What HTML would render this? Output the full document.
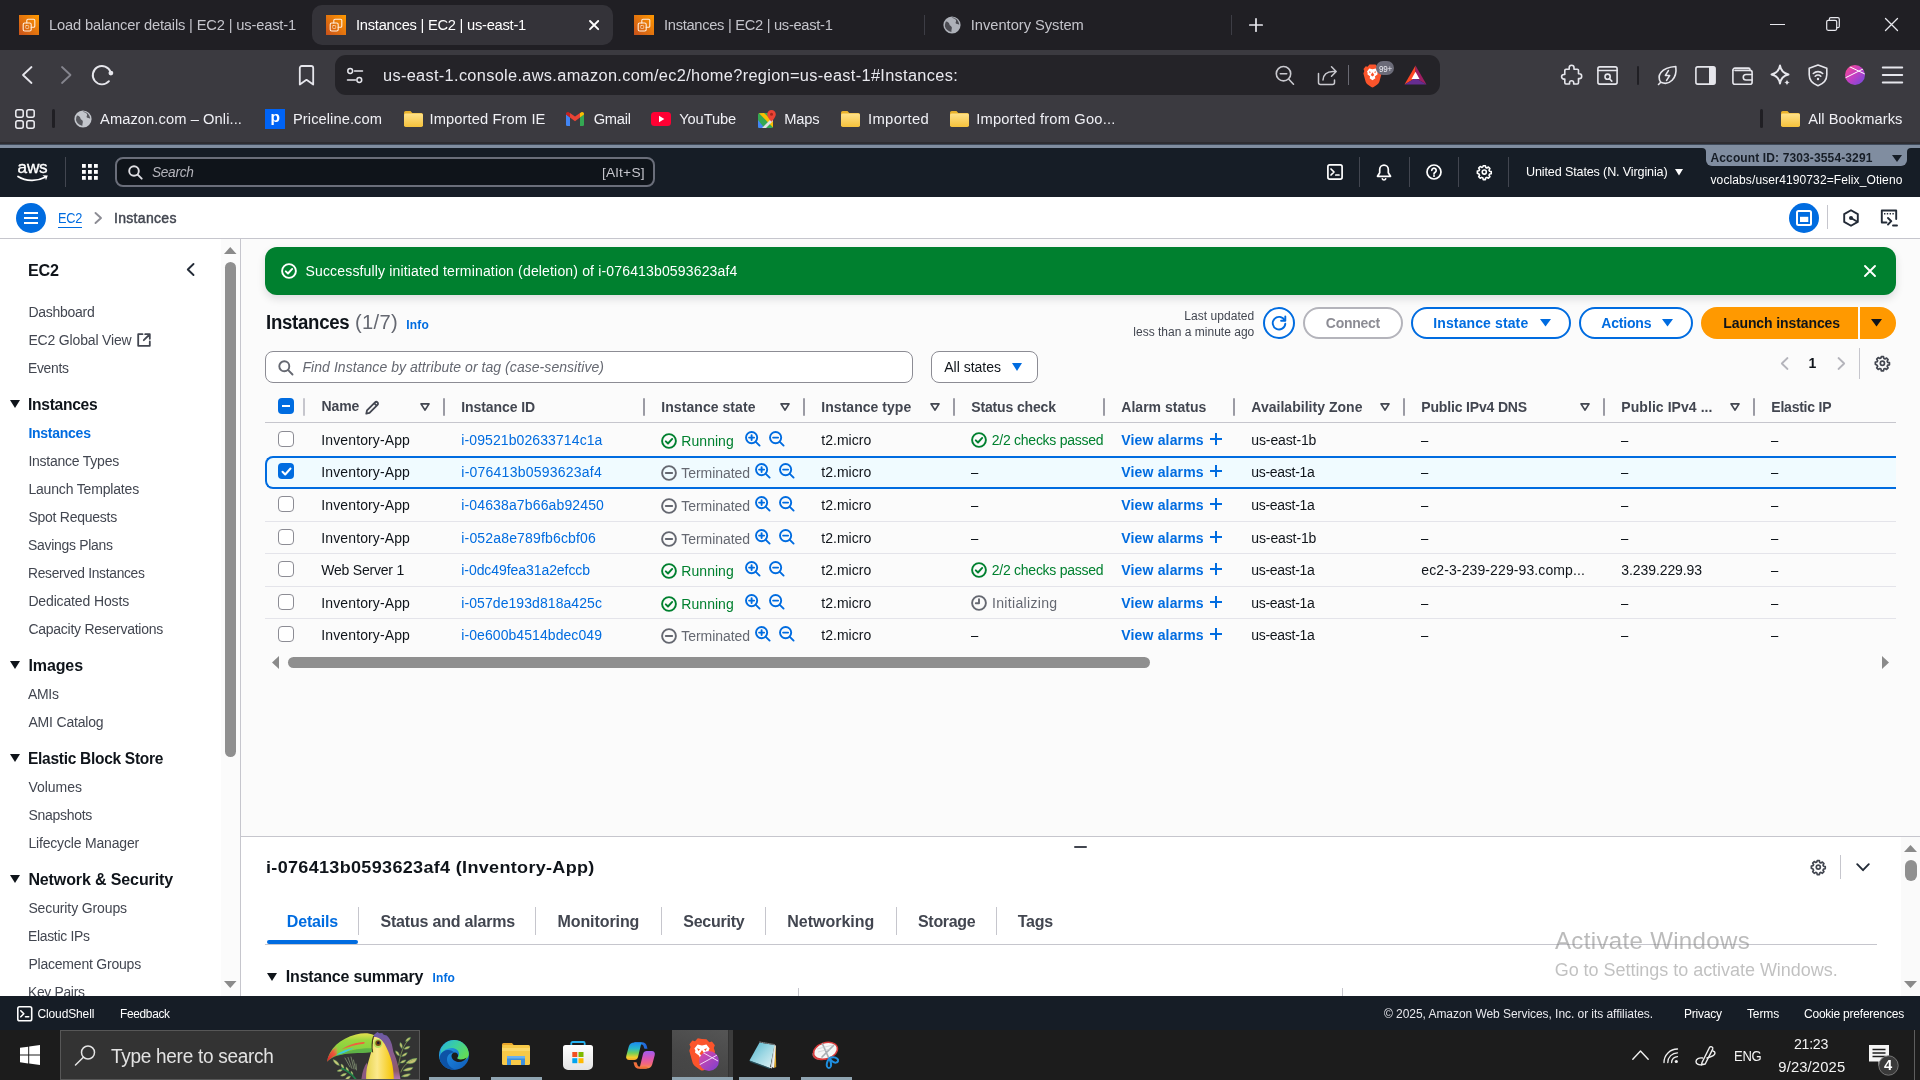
<!DOCTYPE html>
<html lang="en">
<head>
<meta charset="utf-8">
<title>Instances | EC2 | us-east-1</title>
<style>
*{box-sizing:border-box;margin:0;padding:0}
html,body{width:1920px;height:1080px;overflow:hidden;background:#fafafa;font-family:"Liberation Sans",sans-serif;color:#0f141a}
#w{position:absolute;left:0;top:0;width:1920px;height:1080px;overflow:hidden;will-change:transform;background:#fbfbfb}
.abs{position:absolute}
.t{position:absolute;white-space:pre;line-height:1}
svg{position:absolute;overflow:visible}
.s{fill:none;stroke-linecap:round;stroke-linejoin:round}
</style>
</head>
<body>
<div id="w">
<div class="abs" style="left:0px;top:0px;width:1920px;height:50px;background:#201f24;"></div>
<div class="abs" style="left:0px;top:50px;width:1920px;height:93px;background:#3b3a40;"></div>
<div class="abs" style="left:0px;top:142px;width:1920px;height:2px;background:#2e2d32;"></div>
<div class="abs" style="left:0px;top:144px;width:1920px;height:1px;background:#3f4a5a;"></div>
<div class="abs" style="left:0px;top:145px;width:1920px;height:3px;background:#808da0;"></div>
<div class="abs" style="left:312px;top:5px;width:301px;height:40px;background:#343339;border-radius:10px;"></div>
<svg style="left:19px;top:15px;" width="20" height="20" viewBox="0 0 20 20"><defs><linearGradient id="g19" x1="0" y1="1" x2="1" y2="0"><stop offset="0" stop-color="#c8511b"/><stop offset="1" stop-color="#f90"/></linearGradient></defs><rect width="20" height="20" fill="url(#g19)"/><g class="s" stroke="#ffeedd" stroke-width="1.1"><rect x="4.2" y="8" width="8" height="8" rx="1.5"/><rect x="6.7" y="10.5" width="3" height="3" rx=".5" stroke-width=".8" opacity=".7"/><path d="M7.8 8V5.4a1.2 1.2 0 0 1 1.2-1.2h5.6a1.2 1.2 0 0 1 1.2 1.2v5.6a1.2 1.2 0 0 1-1.2 1.2h-2.4"/></g></svg>
<svg style="left:326px;top:15px;" width="20" height="20" viewBox="0 0 20 20"><defs><linearGradient id="g326" x1="0" y1="1" x2="1" y2="0"><stop offset="0" stop-color="#c8511b"/><stop offset="1" stop-color="#f90"/></linearGradient></defs><rect width="20" height="20" fill="url(#g326)"/><g class="s" stroke="#ffeedd" stroke-width="1.1"><rect x="4.2" y="8" width="8" height="8" rx="1.5"/><rect x="6.7" y="10.5" width="3" height="3" rx=".5" stroke-width=".8" opacity=".7"/><path d="M7.8 8V5.4a1.2 1.2 0 0 1 1.2-1.2h5.6a1.2 1.2 0 0 1 1.2 1.2v5.6a1.2 1.2 0 0 1-1.2 1.2h-2.4"/></g></svg>
<svg style="left:634px;top:15px;" width="20" height="20" viewBox="0 0 20 20"><defs><linearGradient id="g634" x1="0" y1="1" x2="1" y2="0"><stop offset="0" stop-color="#c8511b"/><stop offset="1" stop-color="#f90"/></linearGradient></defs><rect width="20" height="20" fill="url(#g634)"/><g class="s" stroke="#ffeedd" stroke-width="1.1"><rect x="4.2" y="8" width="8" height="8" rx="1.5"/><rect x="6.7" y="10.5" width="3" height="3" rx=".5" stroke-width=".8" opacity=".7"/><path d="M7.8 8V5.4a1.2 1.2 0 0 1 1.2-1.2h5.6a1.2 1.2 0 0 1 1.2 1.2v5.6a1.2 1.2 0 0 1-1.2 1.2h-2.4"/></g></svg>
<div class="t" style="left:49.00px;top:18.00px;font-size:14.7px;color:#c4c4cb;letter-spacing:-0.164px;">Load balancer details | EC2 | us-east-1</div>
<div class="t" style="left:356.00px;top:18.00px;font-size:14.7px;color:#ffffff;letter-spacing:-0.245px;">Instances | EC2 | us-east-1</div>
<div class="t" style="left:664.00px;top:18.00px;font-size:14.7px;color:#c4c4cb;letter-spacing:-0.3px;transform:scaleX(0.9999);transform-origin:0 0;">Instances | EC2 | us-east-1</div>
<div class="t" style="left:970.80px;top:18.00px;font-size:14.7px;color:#c4c4cb;letter-spacing:-0.029px;">Inventory System</div>
<svg style="left:588px;top:19px;" width="12" height="12" viewBox="0 0 12 12"><path class="s" stroke="#fff" stroke-width="1.9" d="M2 2l8.2 8.2M10.2 2L2 10.2"/></svg>
<div class="abs" style="left:924px;top:15px;width:1px;height:20px;background:#3d3d45;"></div>
<div class="abs" style="left:1231px;top:15px;width:1px;height:20px;background:#3d3d45;"></div>
<svg style="left:942px;top:15px;" width="20" height="20" viewBox="0 0 20 20"><circle cx="10" cy="10" r="8.6" fill="#aeb1b9"/><path fill="#2a2a30" d="M4 6.5c2 .2 3.2 1.3 3.4 2.8.2 1.6 2 1.6 2.4 3 .3 1.3-.6 2.6-.4 4.6-3-.4-5.8-2.6-6.5-5.7 0-1.800.3-3.300 1.100-4.700zM9.500 2.300c1.600 1.400 3.600 1 4.400 2.600.7 1.500-.7 2-.2 3.300.4 1.100 2.500.6 3.500 1.600-.100-3.800-3.500-7.400-7.700-7.500z" opacity=".75"/></svg>
<svg style="left:1249px;top:18px;" width="14" height="14" viewBox="0 0 14 14"><path class="s" stroke="#e8e8ee" stroke-width="1.7" d="M7 0.800v12.400M0.800 7h12.400"/></svg>
<div class="abs" style="left:1770px;top:24px;width:15px;height:1px;background:#e8e8ee;"></div>
<svg style="left:1826px;top:17px;" width="14" height="14" viewBox="0 0 14 14"><g class="s" stroke="#e8e8ee" stroke-width="1.2"><rect x="0.700" y="3.300" width="10" height="10" rx="1.500"/><path d="M3.300 3.300V2.200a1.500 1.500 0 0 1 1.500-1.500h7a1.500 1.500 0 0 1 1.500 1.500v7a1.500 1.500 0 0 1-1.500 1.500h-1.100"/></g></svg>
<svg style="left:1885px;top:18px;" width="13" height="13" viewBox="0 0 13 13"><path class="s" stroke="#e8e8ee" stroke-width="1.3" d="M0.500 0.500l12 12M12.500 0.500l-12 12"/></svg>
<svg style="left:20px;top:65px;" width="16" height="20" viewBox="0 0 16 20"><path class="s" stroke="#e6e6ec" stroke-width="1.800" d="M11.500 2L3 10l8.500 8"/></svg>
<svg style="left:58px;top:65px;" width="16" height="20" viewBox="0 0 16 20"><path class="s" stroke="#85858e" stroke-width="1.800" d="M4 2l8.500 8L4 18"/></svg>
<svg style="left:91px;top:64px;" width="24" height="22" viewBox="0 0 24 22"><path class="s" stroke="#e6e6ec" stroke-width="1.900" d="M19.650 8.050A9.200 9.200 0 1 0 17.940 17.240"/><circle cx="19.900" cy="9.100" r="2.400" fill="#e6e6ec"/></svg>
<svg style="left:298px;top:65px;" width="17" height="21" viewBox="0 0 17 21"><path class="s" stroke="#e6e6ec" stroke-width="1.800" d="M1.800 3a2 2 0 0 1 2-2h9.400a2 2 0 0 1 2 2v16.500l-6.700-4.700-6.700 4.700z"/></svg>
<div class="abs" style="left:335px;top:55px;width:1105px;height:40px;background:#242328;border-radius:11px;"></div>
<svg style="left:346px;top:67px;" width="18" height="17" viewBox="0 0 18 17"><g class="s" stroke="#e6e6ec" stroke-width="1.500"><circle cx="4.200" cy="4" r="2.400"/><path d="M8.500 4h8"/><circle cx="13.300" cy="13" r="2.400"/><path d="M1.500 13h8"/></g></svg>
<div class="t" style="left:383.00px;top:68.00px;font-size:15.6px;color:#e9e9ef;letter-spacing:0.3px;transform:scaleX(1.0490);transform-origin:0 0;">us-east-1.console.aws.amazon.com/ec2/home?region=us-east-1#Instances:</div>
<svg style="left:1275px;top:65px;" width="20" height="21" viewBox="0 0 20 21"><g class="s" stroke="#c9c9cf" stroke-width="1.600"><circle cx="8.500" cy="8.700" r="7.200"/><path d="M13.800 14.200l4.700 5M5.300 8.700h6.400"/></g></svg>
<svg style="left:1317px;top:65px;" width="22" height="21" viewBox="0 0 22 21"><g class="s" stroke="#c9c9cf" stroke-width="1.500"><path d="M1.500 8.500v9a2 2 0 0 0 2 2h12a2 2 0 0 0 2-2v-2.500"/><path d="M6 15c.3-5 3.500-8.300 10-8.500h3M14.500 1.800l4.700 4.700-4.700 4.700"/></g></svg>
<div class="abs" style="left:1348px;top:65px;width:1px;height:20px;background:#6a6a73;"></div>
<svg style="left:1362px;top:64px;" width="21" height="24" viewBox="0 0 21 24"><path fill="#fb542b" d="M10.500 0.500l3 .1 2 2.100 1.800-.4 2.200 2.600-.8 2 .9 2.600-2.100 7.800c-.4 1.500-1.200 2.600-2.500 3.500l-3.300 2.300c-.8.500-1.600.5-2.400 0L6 20.800c-1.300-.9-2.100-2-2.500-3.500L1.400 9.500l.9-2.600-.8-2 2.200-2.600 1.800.4 2-2.100z"/><path fill="#fff" d="M10.500 5.200l3.200-.7 2.300 2.900-.7 1.500.3 1.400-2.800 2.200.6 1.700-2.900 2-2.900-2 .6-1.700-2.800-2.200.3-1.400L5 7.400l2.300-2.900z"/><path fill="#fb542b" d="M10.500 8.300l1.800 2.800-1.800 1.500-1.800-1.500zM6.800 7.200l2.100.7-1.100 1.300zM14.200 7.200l-2.100.7 1.100 1.300z"/></svg>
<div class="abs" style="left:1376px;top:60.5px;width:17.5px;height:14.5px;background:#6b6b78;border-radius:7px;"></div>
<div class="t" style="left:1378.50px;top:65.00px;font-size:8.5px;color:#ececf2;letter-spacing:-0.3px;transform:scaleX(0.9466);transform-origin:0 0;">99+</div>
<svg style="left:1404px;top:65px;" width="23" height="21" viewBox="0 0 23 21"><path fill="#ff4724" d="M11.500 0.500L0.500 19.500l11-6.500z"/><path fill="#9e1f63" d="M11.500 0.500l11 19-11-6.500z"/><path fill="#662d91" d="M0.500 19.500h22l-11-6.500z"/><path fill="#fff" d="M11.500 6.800l4 7.200h-8z"/></svg>
<svg style="left:1561px;top:65px;" width="21" height="21" viewBox="0 0 21 21"><path class="s" stroke="#e6e6ec" stroke-width="1.600" d="M8.200 2.600a2.400 2.400 0 0 1 4.800 0v1.700h3.300a1.200 1.200 0 0 1 1.200 1.200v3.300h.8a2.400 2.400 0 0 1 0 4.800h-.8v4.200a1.200 1.200 0 0 1-1.200 1.200h-3.600v-1.200a2.100 2.100 0 0 0-4.200 0V19H5a1.200 1.200 0 0 1-1.200-1.200v-3.700H2.900a2.300 2.300 0 0 1 0-4.600h.9V5.500A1.200 1.200 0 0 1 5 4.300h3.200z"/></svg>
<svg style="left:1597px;top:66px;" width="21" height="19" viewBox="0 0 21 19"><g class="s" stroke="#e6e6ec" stroke-width="1.600"><rect x="0.900" y="0.900" width="19.200" height="17.200" rx="1.800"/><path d="M0.900 4.500h19.200"/><circle cx="10.600" cy="10.700" r="2.600"/><path d="M12.500 12.700l2.300 2.400"/></g></svg>
<div class="abs" style="left:1637px;top:66px;width:2px;height:19px;background:#201f24;border-radius:1px;"></div>
<svg style="left:1657px;top:65px;" width="21" height="21" viewBox="0 0 21 21"><g class="s" stroke="#e6e6ec" stroke-width="1.600"><path d="M3.800 17.300C-.5 11 3.500 2.500 18.800 1.500 20.300 13.500 12.500 21 3.800 17.300z"/><path d="M3.500 17.500l-2 2"/><path d="M11.500 5.500l-3.200 5h4.400l-3.200 5" stroke-width="1.400"/></g></svg>
<svg style="left:1695px;top:66px;" width="21" height="19" viewBox="0 0 21 19"><rect x="0.900" y="0.900" width="19.200" height="17.200" rx="1.800" class="s" stroke="#e6e6ec" stroke-width="1.600"/><path fill="#e6e6ec" d="M14 1h4.500a1.600 1.600 0 0 1 1.600 1.600v13.800a1.600 1.600 0 0 1-1.600 1.600H14z"/></svg>
<svg style="left:1732px;top:66px;" width="21" height="19" viewBox="0 0 21 19"><g class="s" stroke="#e6e6ec" stroke-width="1.600"><path d="M0.900 4.200v12a2 2 0 0 0 2 2h15.200a2 2 0 0 0 2-2V6.400a2 2 0 0 0-2-2H3"/><path d="M0.900 4.200a2.100 2.100 0 0 1 2.100-2.100H16.500a1.500 1.500 0 0 1 1.500 1.500v.8"/><path d="M20 8.500h-6a2.500 2.500 0 0 0 0 5.500h6"/></g></svg>
<svg style="left:1769px;top:64px;" width="23" height="23" viewBox="0 0 23 23"><g class="s" stroke="#e6e6ec" stroke-width="1.900"><path d="M11 1.500c.8 5 3 7.700 8.500 9-5.500 1.300-7.700 4-8.500 9-.8-5-3-7.700-8.500-9 5.500-1.300 7.700-4 8.500-9z"/></g><path fill="#e6e6ec" d="M18 15.500c.3 1.900 1.100 2.700 3 3-1.900.3-2.700 1.100-3 3-.3-1.900-1.100-2.700-3-3 1.900-.3 2.700-1.100 3-3z"/></svg>
<svg style="left:1808px;top:64px;" width="20" height="23" viewBox="0 0 20 23"><g class="s" stroke="#e6e6ec" stroke-width="1.600"><path d="M10 1L1.200 4.200v6.500c0 5 3.500 9 8.800 11 5.300-2 8.800-6 8.800-11V4.200z"/><path d="M5.300 9.500a6.800 6.800 0 0 1 9.400 0M7.200 12.200a4 4 0 0 1 5.600 0"/></g><circle cx="10" cy="15" r="1.200" fill="#e6e6ec"/></svg>
<svg style="left:1845px;top:65px;" width="20" height="20" viewBox="0 0 20 20"><defs><linearGradient id="av" x1="0" y1="0" x2="1" y2="1"><stop offset="0" stop-color="#ff4a8d"/><stop offset=".5" stop-color="#c23fc4"/><stop offset="1" stop-color="#6a4be0"/></linearGradient><clipPath id="avc"><circle cx="10" cy="10" r="10"/></clipPath></defs><circle cx="10" cy="10" r="10" fill="url(#av)"/><g clip-path="url(#avc)" stroke="#fff" stroke-width="1"><path d="M0 13L20 3M3 1l17 8"/></g></svg>
<svg style="left:1882px;top:66px;" width="21" height="18" viewBox="0 0 21 18"><path class="s" stroke="#e6e6ec" stroke-width="2" d="M0.800 1.500h19.400M0.800 9h19.400M0.800 16.500h19.400"/></svg>
<svg style="left:15px;top:109px;" width="20" height="20" viewBox="0 0 20 20"><g class="s" stroke="#f0f0f5" stroke-width="1.500"><rect x="0.800" y="0.800" width="7.400" height="7.400" rx="2"/><rect x="11.800" y="0.800" width="7.400" height="7.400" rx="2"/><rect x="0.800" y="11.800" width="7.400" height="7.400" rx="2"/><rect x="11.800" y="11.800" width="7.400" height="7.400" rx="2"/></g></svg>
<div class="abs" style="left:52px;top:109px;width:3px;height:19px;background:#201f24;border-radius:1.500px;"></div>
<svg style="left:74px;top:110px;" width="18" height="18" viewBox="0 0 18 18"><circle cx="9" cy="9" r="8.600" fill="#c3c6cc"/><path fill="#3b3b41" opacity=".8" d="M3 5.500c2 .2 3.200 1.300 3.400 2.800.2 1.500 2 1.500 2.400 2.900.3 1.300-.6 2.500-.4 4.500C5.400 15.300 2.600 13 2 10c0-1.700.3-3.200 1-4.500zM8.500 1.300c1.600 1.400 3.600 1 4.400 2.600.7 1.500-.7 2-.2 3.300.4 1.100 2.500.6 3.500 1.600C16 5 12.700 1.400 8.500 1.300z"/></svg>
<div class="t" style="left:100.00px;top:112.00px;font-size:14.7px;color:#f0f0f5;letter-spacing:0.080px;">Amazon.com – Onli...</div>
<div class="abs" style="left:265px;top:109px;width:20px;height:20px;background:#0063f5;"></div>
<div class="t" style="left:270.60px;top:109.00px;font-size:15.5px;color:#fff;font-weight:700;letter-spacing:-0.069px;">p</div>
<div class="t" style="left:293.00px;top:112.00px;font-size:14.7px;color:#f0f0f5;letter-spacing:0.065px;">Priceline.com</div>
<svg style="left:403.5px;top:111px;" width="19" height="16" viewBox="0 0 19 16"><defs><linearGradient id="f403" x1="0" y1="0" x2="0" y2="1"><stop offset="0" stop-color="#ffe28a"/><stop offset="1" stop-color="#f5c13b"/></linearGradient></defs><path fill="#e9b22c" d="M0 1.700A1.700 1.700 0 0 1 1.700 0h4.800l1.800 2H17.300A1.700 1.700 0 0 1 19 3.700V5H0z"/><rect y="2.600" width="19" height="13.400" rx="1.700" fill="url(#f403)"/></svg>
<div class="t" style="left:429.50px;top:112.00px;font-size:14.7px;color:#f0f0f5;letter-spacing:0.108px;">Imported From IE</div>
<svg style="left:566px;top:112px;" width="18" height="14" viewBox="0 0 18 14"><path fill="#4285f4" d="M0 2v10.800A1.200 1.200 0 0 0 1.200 14H4V5.500z"/><path fill="#34a853" d="M14 14h2.800a1.200 1.200 0 0 0 1.200-1.200V2L14 5.500z"/><path fill="#fbbc04" d="M14 .9v4.600L18 2.600V1.800c0-1.500-1.700-2.300-2.900-1.400z"/><path fill="#c5221f" d="M0 2.600l4 2.900V.9L2.900.4C1.700-.5 0 .3 0 1.800z"/><path fill="#ea4335" d="M4 5.500V.9l5 3.700 5-3.700v4.600l-5 3.700z"/></svg>
<div class="t" style="left:593.70px;top:112.00px;font-size:14.7px;color:#f0f0f5;letter-spacing:-0.272px;">Gmail</div>
<svg style="left:651px;top:112px;" width="20" height="14" viewBox="0 0 20 14"><rect width="20" height="14" rx="3.500" fill="#ff0033"/><path fill="#fff" d="M8 3.800v6.400L13.300 7z"/></svg>
<div class="t" style="left:679.20px;top:112.00px;font-size:14.7px;color:#f0f0f5;letter-spacing:-0.103px;">YouTube</div>
<svg style="left:758px;top:110px;" width="18" height="19" viewBox="0 0 18 19"><rect y="3" width="15" height="15" rx="1.500" fill="#34a853"/><path fill="#4285f4" d="M0 16.500V10l6.500 8H1.500A1.500 1.500 0 0 1 0 16.500z"/><path fill="#fbbc04" d="M1 3.200L15 17.600v-6L6 3z"/><path fill="#e1e1e1" d="M4 18l11-11v4L8 18z"/><path fill="#ea4335" d="M13.500 0a4.300 4.300 0 0 0-4.300 4.300c0 3 4.300 7.500 4.300 7.500s4.300-4.500 4.300-7.500A4.300 4.300 0 0 0 13.500 0z"/><circle cx="13.500" cy="4.300" r="1.500" fill="#a5271c"/></svg>
<div class="t" style="left:784.20px;top:112.00px;font-size:14.7px;color:#f0f0f5;letter-spacing:-0.155px;">Maps</div>
<svg style="left:840.5px;top:111px;" width="19" height="16" viewBox="0 0 19 16"><defs><linearGradient id="f840" x1="0" y1="0" x2="0" y2="1"><stop offset="0" stop-color="#ffe28a"/><stop offset="1" stop-color="#f5c13b"/></linearGradient></defs><path fill="#e9b22c" d="M0 1.700A1.700 1.700 0 0 1 1.700 0h4.800l1.800 2H17.300A1.700 1.700 0 0 1 19 3.700V5H0z"/><rect y="2.600" width="19" height="13.400" rx="1.700" fill="url(#f840)"/></svg>
<div class="t" style="left:868.20px;top:112.00px;font-size:14.7px;color:#f0f0f5;letter-spacing:0.3px;transform:scaleX(1.0105);transform-origin:0 0;">Imported</div>
<svg style="left:950px;top:111px;" width="19" height="16" viewBox="0 0 19 16"><defs><linearGradient id="f950" x1="0" y1="0" x2="0" y2="1"><stop offset="0" stop-color="#ffe28a"/><stop offset="1" stop-color="#f5c13b"/></linearGradient></defs><path fill="#e9b22c" d="M0 1.700A1.700 1.700 0 0 1 1.700 0h4.800l1.800 2H17.300A1.700 1.700 0 0 1 19 3.700V5H0z"/><rect y="2.600" width="19" height="13.400" rx="1.700" fill="url(#f950)"/></svg>
<div class="t" style="left:976.20px;top:112.00px;font-size:14.7px;color:#f0f0f5;letter-spacing:0.189px;">Imported from Goo...</div>
<div class="abs" style="left:1760px;top:109px;width:3px;height:19px;background:#201f24;border-radius:1.500px;"></div>
<svg style="left:1780.5px;top:111px;" width="19" height="16" viewBox="0 0 19 16"><defs><linearGradient id="f1780" x1="0" y1="0" x2="0" y2="1"><stop offset="0" stop-color="#ffe28a"/><stop offset="1" stop-color="#f5c13b"/></linearGradient></defs><path fill="#e9b22c" d="M0 1.700A1.700 1.700 0 0 1 1.700 0h4.800l1.800 2H17.300A1.700 1.700 0 0 1 19 3.700V5H0z"/><rect y="2.600" width="19" height="13.400" rx="1.700" fill="url(#f1780)"/></svg>
<div class="t" style="left:1808.20px;top:112.00px;font-size:14.7px;color:#f0f0f5;letter-spacing:0.033px;">All Bookmarks</div>
<div class="abs" style="left:0px;top:148px;width:1920px;height:49px;background:#161d26;"></div>
<div class="t" style="left:17.60px;top:159.00px;font-size:17.2px;color:#fff;letter-spacing:-0.259px;-webkit-text-stroke:.35px #fff;">aws</div>
<svg style="left:16.5px;top:175px;" width="32" height="8" viewBox="0 0 32 8"><path class="s" stroke="#fff" stroke-width="1.700" d="M1 1.500C9 6.500 20 6.500 27.500 2.500"/><path fill="#fff" d="M25.500 0.300l5.300.2-1.800 4.700-.9-2.700z"/></svg>
<div class="abs" style="left:65px;top:157px;width:1px;height:30px;background:#424650;"></div>
<svg style="left:82px;top:164px;" width="16" height="16" viewBox="0 0 16 16"><rect x="0" y="0" width="3.800" height="3.800" fill="#fff"/><rect x="0" y="6" width="3.800" height="3.800" fill="#fff"/><rect x="0" y="12" width="3.800" height="3.800" fill="#fff"/><rect x="6" y="0" width="3.800" height="3.800" fill="#fff"/><rect x="6" y="6" width="3.800" height="3.800" fill="#fff"/><rect x="6" y="12" width="3.800" height="3.800" fill="#fff"/><rect x="12" y="0" width="3.800" height="3.800" fill="#fff"/><rect x="12" y="6" width="3.800" height="3.800" fill="#fff"/><rect x="12" y="12" width="3.800" height="3.800" fill="#fff"/></svg>
<div class="abs" style="left:115px;top:157px;width:540px;height:29.5px;background:#0f141a;border:2px solid #6a6e7a;border-radius:8px;"></div>
<svg style="left:128px;top:165px;" width="15" height="15" viewBox="0 0 15 15"><g class="s" stroke="#dedee3" stroke-width="1.900"><circle cx="6" cy="6" r="4.800"/><path d="M9.700 9.700l4 4"/></g></svg>
<div class="t" style="left:152.00px;top:165.00px;font-size:14px;color:#b4b4bb;font-style:italic;letter-spacing:-0.3px;transform:scaleX(0.9751);transform-origin:0 0;">Search</div>
<div class="t" style="left:601.50px;top:166.00px;font-size:13.5px;color:#c6c6cd;letter-spacing:0.3px;transform:scaleX(1.0176);transform-origin:0 0;">[Alt+S]</div>
<svg style="left:1327px;top:164px;" width="16" height="16" viewBox="0 0 16 16"><g class="s" stroke="#fff" stroke-width="1.700"><rect x="0.900" y="0.900" width="14.200" height="14.200" rx="1.800"/><path d="M4 5l3 3-3 3M8.800 11h3.200"/></g></svg>
<div class="abs" style="left:1359px;top:157px;width:1px;height:30px;background:#424650;"></div>
<div class="abs" style="left:1409px;top:157px;width:1px;height:30px;background:#424650;"></div>
<div class="abs" style="left:1458px;top:157px;width:1px;height:30px;background:#424650;"></div>
<div class="abs" style="left:1508px;top:157px;width:1px;height:30px;background:#424650;"></div>
<svg style="left:1376px;top:164px;" width="16" height="17" viewBox="0 0 16 17"><path class="s" stroke="#fff" stroke-width="1.700" d="M8 1.200a4.300 4.300 0 0 0-4.300 4.300v3.200L1.500 12.300h13L12.300 8.700V5.500A4.300 4.300 0 0 0 8 1.200zM6.300 14.800a1.800 1.800 0 0 0 3.400 0"/></svg>
<svg style="left:1426px;top:164px;" width="16" height="16" viewBox="0 0 16 16"><circle cx="8" cy="8" r="7" class="s" stroke="#fff" stroke-width="1.700"/><path class="s" stroke="#fff" stroke-width="1.700" d="M5.800 6.300a2.200 2.200 0 1 1 3.400 1.900c-.8.500-1.200.9-1.200 1.700"/><circle cx="8" cy="12" r="1" fill="#fff"/></svg>
<svg style="left:1476.7px;top:164.7px;" width="14.6" height="14.6" viewBox="0 0 16 16.400"><g class="s" stroke="#fff" stroke-width="1.8" transform="translate(0 -.2)"><path d="M6.800 1h2.400l.4 1.900 1.300.6 1.700-1 1.700 1.700-1 1.700.6 1.300 1.900.4v2.400l-1.900.4-.6 1.300 1 1.700-1.700 1.700-1.700-1-1.300.6-.4 1.900H6.800l-.4-1.900-1.300-.6-1.700 1-1.700-1.700 1-1.700-.6-1.300L.2 9.400V7l1.900-.4.6-1.300-1-1.700 1.700-1.700 1.700 1 1.300-.6z"/><circle cx="8" cy="8.200" r="2.300"/></g></svg>
<div class="t" style="left:1526.00px;top:166.00px;font-size:12.6px;color:#fff;letter-spacing:-0.143px;">United States (N. Virginia)</div>
<svg style="left:1674.5px;top:169px;" width="8" height="6.5" viewBox="0 0 8 6.5"><path fill="#fff" d="M0 0h8L4 6.500z"/></svg>
<div class="abs" style="left:1706px;top:147px;width:201px;height:18.6px;background:#808da0;border-radius:0 0 6px 6px;"></div>
<div class="abs" style="left:1702px;top:148px;width:4px;height:4px;background:#808da0;"></div>
<div class="abs" style="left:1698px;top:148px;width:8px;height:8px;background:#161d26;border-radius:0 4px 0 0;"></div>
<div class="abs" style="left:1907px;top:148px;width:4px;height:4px;background:#808da0;"></div>
<div class="abs" style="left:1907px;top:148px;width:8px;height:8px;background:#161d26;border-radius:4px 0 0 0;"></div>
<div class="t" style="left:1710.50px;top:152.00px;font-size:12px;color:#161d26;font-weight:700;letter-spacing:0.125px;">Account ID: 7303-3554-3291</div>
<svg style="left:1892px;top:155px;" width="10" height="7" viewBox="0 0 10 7"><path fill="#161d26" d="M0 0h10L5 7z"/></svg>
<div class="t" style="left:1710.50px;top:174.00px;font-size:12px;color:#fff;letter-spacing:0.110px;">voclabs/user4190732=Felix_Otieno</div>
<div class="abs" style="left:0px;top:197px;width:1920px;height:41px;background:#fff;"></div>
<div class="abs" style="left:0px;top:238px;width:1920px;height:1px;background:#c6c6cd;"></div>
<div class="abs" style="left:16px;top:203px;width:30px;height:30px;background:#006ce0;border-radius:15px;"></div>
<svg style="left:24px;top:212px;" width="14" height="12" viewBox="0 0 14 12"><path stroke="#fff" stroke-width="2" d="M0 1h14M0 6h14M0 11h14"/></svg>
<div class="t" style="left:58.00px;top:211.00px;font-size:14px;color:#006ce0;letter-spacing:-0.3px;transform:scaleX(0.9114);transform-origin:0 0;text-decoration:underline;text-underline-offset:3.500px;text-decoration-thickness:1px;">EC2</div>
<svg style="left:94px;top:212px;" width="9" height="12" viewBox="0 0 9 12"><path class="s" stroke="#8c8c94" stroke-width="1.900" d="M1.500 1l5.500 5-5.500 5"/></svg>
<div class="t" style="left:114.30px;top:211.00px;font-size:14px;color:#424650;letter-spacing:0.3px;transform:scaleX(1.0010);transform-origin:0 0;-webkit-text-stroke:.45px #424650;">Instances</div>
<div class="abs" style="left:1789px;top:203px;width:30px;height:30px;background:#006ce0;border-radius:15px;"></div>
<svg style="left:1796px;top:210px;" width="16" height="16" viewBox="0 0 16 16"><rect x="1" y="1" width="14" height="14" rx="1.500" class="s" stroke="#fff" stroke-width="2"/><rect x="4" y="6.800" width="8.300" height="5.200" fill="#fff"/></svg>
<div class="abs" style="left:1827px;top:205px;width:1px;height:24px;background:#c6c6cd;"></div>
<svg style="left:1842px;top:209px;" width="18" height="18" viewBox="0 0 18 18"><g class="s" stroke="#232b37" stroke-width="1.900"><path d="M9 1.200l6.800 3.900v7.800L9 16.800 2.200 12.900V5.100z"/><path d="M9 9l6 3.500"/></g><circle cx="9" cy="9" r="2" fill="#232b37"/></svg>
<svg style="left:1880px;top:209px;" width="18" height="18" viewBox="0 0 18 18"><g class="s" stroke="#232b37" stroke-width="1.900"><path d="M6.500 13.500H1.800V1.500h14.400v8.500"/><path d="M8 9l3.300 3.200L8 15.500M13 16.500h4"/></g><path stroke="#232b37" stroke-width="1.400" stroke-dasharray="1.400 1.400" d="M4 4.700h10"/></svg>
<div class="abs" style="left:0px;top:239px;width:240px;height:757px;background:#fff;"></div>
<div class="abs" style="left:240px;top:239px;width:1px;height:757px;background:#c6c6cd;"></div>
<div class="t" style="left:28.40px;top:262.00px;font-size:17.2px;color:#0f141a;font-weight:700;letter-spacing:-0.3px;transform:scaleX(0.9405);transform-origin:0 0;">EC2</div>
<svg style="left:186px;top:263px;" width="9" height="13" viewBox="0 0 9 13"><path class="s" stroke="#232b37" stroke-width="1.900" d="M7.500 1L1.800 6.500l5.700 5.500"/></svg>
<div class="t" style="left:28.40px;top:305.00px;font-size:14px;color:#424650;letter-spacing:-0.267px;">Dashboard</div>
<div class="t" style="left:28.40px;top:333.00px;font-size:14px;color:#424650;letter-spacing:-0.165px;">EC2 Global View</div>
<svg style="left:137px;top:333px;" width="14" height="14" viewBox="0 0 14 14"><g class="s" stroke="#424650" stroke-width="1.800"><path d="M5.500 1.200H1.200v11.600h11.600V8.500"/><path d="M8.200 1.200h4.600v4.600M12.500 1.500L6.800 7.200"/></g></svg>
<div class="t" style="left:28.40px;top:361.00px;font-size:14px;color:#424650;letter-spacing:-0.3px;transform:scaleX(0.9899);transform-origin:0 0;">Events</div>
<svg style="left:10.4px;top:400.4px;" width="10" height="8" viewBox="0 0 10 8"><path fill="#0f141a" d="M0 0h10L5 8z"/></svg>
<div class="t" style="left:28.40px;top:397.00px;font-size:16px;color:#0f141a;font-weight:700;letter-spacing:-0.3px;transform:scaleX(0.9759);transform-origin:0 0;">Instances</div>
<div class="t" style="left:28.40px;top:426.00px;font-size:14px;color:#006ce0;font-weight:700;letter-spacing:-0.255px;">Instances</div>
<div class="t" style="left:28.40px;top:454.00px;font-size:14px;color:#424650;letter-spacing:-0.237px;">Instance Types</div>
<div class="t" style="left:28.40px;top:482.00px;font-size:14px;color:#424650;letter-spacing:-0.173px;">Launch Templates</div>
<div class="t" style="left:28.40px;top:510.00px;font-size:14px;color:#424650;letter-spacing:-0.250px;">Spot Requests</div>
<div class="t" style="left:28.40px;top:538.00px;font-size:14px;color:#424650;letter-spacing:-0.3px;transform:scaleX(0.9974);transform-origin:0 0;">Savings Plans</div>
<div class="t" style="left:28.40px;top:566.00px;font-size:14px;color:#424650;letter-spacing:-0.3px;transform:scaleX(0.9853);transform-origin:0 0;">Reserved Instances</div>
<div class="t" style="left:28.40px;top:594.00px;font-size:14px;color:#424650;letter-spacing:-0.141px;">Dedicated Hosts</div>
<div class="t" style="left:28.40px;top:622.00px;font-size:14px;color:#424650;letter-spacing:-0.260px;">Capacity Reservations</div>
<svg style="left:10.4px;top:661.4px;" width="10" height="8" viewBox="0 0 10 8"><path fill="#0f141a" d="M0 0h10L5 8z"/></svg>
<div class="t" style="left:28.40px;top:658.00px;font-size:16px;color:#0f141a;font-weight:700;letter-spacing:-0.090px;">Images</div>
<div class="t" style="left:28.40px;top:687.00px;font-size:14px;color:#424650;letter-spacing:-0.3px;transform:scaleX(0.9970);transform-origin:0 0;">AMIs</div>
<div class="t" style="left:28.40px;top:715.00px;font-size:14px;color:#424650;letter-spacing:-0.177px;">AMI Catalog</div>
<svg style="left:10.4px;top:754.4px;" width="10" height="8" viewBox="0 0 10 8"><path fill="#0f141a" d="M0 0h10L5 8z"/></svg>
<div class="t" style="left:28.40px;top:751.00px;font-size:16px;color:#0f141a;font-weight:700;letter-spacing:-0.3px;transform:scaleX(0.9702);transform-origin:0 0;">Elastic Block Store</div>
<div class="t" style="left:28.40px;top:780.00px;font-size:14px;color:#424650;letter-spacing:-0.015px;">Volumes</div>
<div class="t" style="left:28.40px;top:808.00px;font-size:14px;color:#424650;letter-spacing:-0.286px;">Snapshots</div>
<div class="t" style="left:28.40px;top:836.00px;font-size:14px;color:#424650;letter-spacing:-0.178px;">Lifecycle Manager</div>
<svg style="left:10.4px;top:875.4px;" width="10" height="8" viewBox="0 0 10 8"><path fill="#0f141a" d="M0 0h10L5 8z"/></svg>
<div class="t" style="left:28.40px;top:872.00px;font-size:16px;color:#0f141a;font-weight:700;letter-spacing:-0.118px;">Network &amp; Security</div>
<div class="t" style="left:28.40px;top:901.00px;font-size:14px;color:#424650;letter-spacing:-0.118px;">Security Groups</div>
<div class="t" style="left:28.40px;top:929.00px;font-size:14px;color:#424650;letter-spacing:-0.3px;transform:scaleX(0.9926);transform-origin:0 0;">Elastic IPs</div>
<div class="t" style="left:28.40px;top:957.00px;font-size:14px;color:#424650;letter-spacing:-0.210px;">Placement Groups</div>
<div class="t" style="left:28.40px;top:985.00px;font-size:14px;color:#424650;letter-spacing:-0.3px;transform:scaleX(0.9891);transform-origin:0 0;">Key Pairs</div>
<div class="abs" style="left:221px;top:239px;width:19px;height:757px;background:#fbfbfb;"></div>
<svg style="left:224.3px;top:246.7px;" width="12.5" height="7" viewBox="0 0 12.5 7"><path fill="#8a8a8a" d="M6.250 0L12.500 7H0z"/></svg>
<svg style="left:224.3px;top:980.8px;" width="12.5" height="7" viewBox="0 0 12.5 7"><path fill="#8a8a8a" d="M0 0h12.500L6.250 7z"/></svg>
<div class="abs" style="left:225px;top:262px;width:11px;height:495px;background:#8f8f8f;border-radius:5.500px;"></div>
<div class="abs" style="left:0px;top:996px;width:1920px;height:34px;background:#161d26;"></div>
<div class="abs" style="left:241px;top:239px;width:1679px;height:597px;background:#fbfbfb;"></div>
<div class="abs" style="left:265px;top:247px;width:1631px;height:48px;background:#00802f;border-radius:12px;box-shadow:0 4px 8px rgba(0,7,22,.12);"></div>
<svg style="left:281px;top:263px;" width="16" height="16" viewBox="0 0 16 16"><g class="s" stroke="#fff" stroke-width="1.900"><circle cx="8" cy="8" r="6.900"/><path d="M4.800 8.300l2.200 2.200 4.200-4.600"/></g></svg>
<div class="t" style="left:305.50px;top:264.00px;font-size:14px;color:#fff;letter-spacing:0.161px;">Successfully initiated termination (deletion) of i-076413b0593623af4</div>
<svg style="left:1864px;top:265px;" width="12" height="12" viewBox="0 0 12 12"><path class="s" stroke="#fff" stroke-width="1.900" d="M1 1l10 10M11 1L1 11"/></svg>
<div class="t" style="left:266.00px;top:313.00px;font-size:19.4px;color:#0f141a;font-weight:700;letter-spacing:-0.3px;transform:scaleX(0.9612);transform-origin:0 0;">Instances</div>
<div class="t" style="left:354.60px;top:313.00px;font-size:19.4px;color:#656871;letter-spacing:0.3px;transform:scaleX(1.0393);transform-origin:0 0;">(1/7)</div>
<div class="t" style="left:406.20px;top:319.00px;font-size:12px;color:#006ce0;font-weight:700;letter-spacing:0.200px;">Info</div>
<div class="t" style="left:1184.30px;top:310.00px;font-size:12px;color:#424650;letter-spacing:0.049px;">Last updated</div>
<div class="t" style="left:1133.30px;top:326.00px;font-size:12px;color:#424650;letter-spacing:0.011px;">less than a minute ago</div>
<div class="abs" style="left:1263px;top:307px;width:32px;height:32px;background:#fff;border:2px solid #006ce0;border-radius:16px;"></div>
<svg style="left:1271px;top:315px;" width="16" height="16" viewBox="0 0 16 16"><g class="s" stroke="#006ce0" stroke-width="1.900"><path d="M13.600 5.200A6.300 6.300 0 1 0 14.300 8.800"/><path d="M14.300 1.500v4.200h-4.200"/></g></svg>
<div class="abs" style="left:1303px;top:307px;width:100px;height:32px;background:#fff;border:2px solid #b4b4bb;border-radius:16px;"></div>
<div class="t" style="left:1325.80px;top:316.00px;font-size:14px;color:#8c8c94;font-weight:700;letter-spacing:-0.257px;">Connect</div>
<div class="abs" style="left:1411px;top:307px;width:160px;height:32px;background:#fff;border:2px solid #006ce0;border-radius:16px;"></div>
<div class="t" style="left:1433.30px;top:316.00px;font-size:14px;color:#006ce0;font-weight:700;letter-spacing:0.116px;">Instance state</div>
<svg style="left:1540px;top:319.2px;" width="11" height="7.5" viewBox="0 0 11 7.5"><path fill="#006ce0" d="M0 0h11L5.500 7.500z"/></svg>
<div class="abs" style="left:1579px;top:307px;width:114px;height:32px;background:#fff;border:2px solid #006ce0;border-radius:16px;"></div>
<div class="t" style="left:1601.30px;top:316.00px;font-size:14px;color:#006ce0;font-weight:700;letter-spacing:-0.192px;">Actions</div>
<svg style="left:1661.5px;top:319.2px;" width="11" height="7.5" viewBox="0 0 11 7.5"><path fill="#006ce0" d="M0 0h11L5.500 7.500z"/></svg>
<div class="abs" style="left:1701px;top:307px;width:157px;height:32px;background:#ff9900;border-radius:16px 0 0 16px;"></div>
<div class="abs" style="left:1860px;top:307px;width:36px;height:32px;background:#ff9900;border-radius:0 16px 16px 0;"></div>
<div class="t" style="left:1723.30px;top:316.00px;font-size:14px;color:#0f141a;font-weight:700;letter-spacing:-0.098px;">Launch instances</div>
<svg style="left:1870.8px;top:319.2px;" width="11" height="7.5" viewBox="0 0 11 7.5"><path fill="#0f141a" d="M0 0h11L5.500 7.500z"/></svg>
<div class="abs" style="left:265px;top:351px;width:648px;height:32px;background:#fff;border:1px solid #8c8c94;border-radius:8px;"></div>
<svg style="left:277.5px;top:359.5px;" width="16" height="16" viewBox="0 0 16 16"><g class="s" stroke="#656871" stroke-width="1.900"><circle cx="6.300" cy="6.300" r="5"/><path d="M10.200 10.200l4.300 4.300"/></g></svg>
<div class="t" style="left:302.50px;top:360.00px;font-size:14px;color:#656871;font-style:italic;letter-spacing:0.054px;">Find Instance by attribute or tag (case-sensitive)</div>
<div class="abs" style="left:931px;top:351px;width:107px;height:32px;background:#fff;border:1px solid #8c8c94;border-radius:8px;"></div>
<div class="t" style="left:944.30px;top:360.00px;font-size:14px;color:#0f141a;letter-spacing:-0.011px;">All states</div>
<svg style="left:1012px;top:363px;" width="10" height="8" viewBox="0 0 10 8"><path fill="#006ce0" d="M0 0h10L5 8z"/></svg>
<svg style="left:1780px;top:357px;" width="9" height="13" viewBox="0 0 9 13"><path class="s" stroke="#b4b4bb" stroke-width="1.800" d="M7.500 1L1.800 6.500l5.700 5.500"/></svg>
<div class="t" style="left:1808.50px;top:356.00px;font-size:14px;color:#0f141a;font-weight:700;letter-spacing:0.203px;">1</div>
<svg style="left:1837px;top:357px;" width="9" height="13" viewBox="0 0 9 13"><path class="s" stroke="#b4b4bb" stroke-width="1.800" d="M1.500 1l5.700 5.500L1.500 12"/></svg>
<div class="abs" style="left:1859px;top:348px;width:1px;height:31px;background:#c6c6cd;"></div>
<svg style="left:1874.6px;top:355.6px;" width="14.8" height="14.8" viewBox="0 0 16 16.400"><g class="s" stroke="#424650" stroke-width="1.9" transform="translate(0 -.2)"><path d="M6.800 1h2.400l.4 1.900 1.300.6 1.700-1 1.700 1.700-1 1.700.6 1.300 1.900.4v2.400l-1.900.4-.6 1.300 1 1.700-1.700 1.700-1.700-1-1.300.6-.4 1.900H6.800l-.4-1.900-1.300-.6-1.700 1-1.700-1.700 1-1.700-.6-1.300L.2 9.400V7l1.900-.4.6-1.300-1-1.700 1.700-1.700 1.700 1 1.300-.6z"/><circle cx="8" cy="8.200" r="2.300"/></g></svg>
<div class="abs" style="left:278px;top:398px;width:16px;height:16px;background:#006ce0;border-radius:4px;"></div>
<div class="abs" style="left:282px;top:405px;width:8px;height:2px;background:#fff;"></div>
<div class="abs" style="left:303px;top:398px;width:2px;height:17.5px;background:#c6c6cd;border-radius:1px;"></div>
<div class="t" style="left:321.50px;top:399.00px;font-size:14px;color:#424650;font-weight:700;letter-spacing:-0.085px;">Name</div>
<svg style="left:365px;top:400.5px;" width="14" height="14" viewBox="0 0 14 14"><g class="s" stroke="#424650" stroke-width="1.800"><path d="M9.300 2.300l2.400 2.400M1.300 12.700l.7-3.300 8-8a1.700 1.700 0 0 1 2.500 2.500l-8 8z"/></g></svg>
<svg style="left:420px;top:403px;" width="10" height="8" viewBox="0 0 10 8"><path class="s" stroke="#424650" stroke-width="1.700" d="M1 0.900h8L5 7.100z"/></svg>
<div class="abs" style="left:443px;top:398px;width:2px;height:17.5px;background:#9b9ba4;border-radius:1px;"></div>
<div class="t" style="left:461.30px;top:400.00px;font-size:14px;color:#424650;font-weight:700;letter-spacing:-0.091px;">Instance ID</div>
<div class="abs" style="left:643px;top:398px;width:2px;height:17.5px;background:#9b9ba4;border-radius:1px;"></div>
<div class="t" style="left:661.30px;top:400.00px;font-size:14px;color:#424650;font-weight:700;letter-spacing:0.059px;">Instance state</div>
<svg style="left:780px;top:403px;" width="10" height="8" viewBox="0 0 10 8"><path class="s" stroke="#424650" stroke-width="1.700" d="M1 0.900h8L5 7.100z"/></svg>
<div class="abs" style="left:803px;top:398px;width:2px;height:17.5px;background:#9b9ba4;border-radius:1px;"></div>
<div class="t" style="left:821.30px;top:400.00px;font-size:14px;color:#424650;font-weight:700;letter-spacing:0.040px;">Instance type</div>
<svg style="left:930px;top:403px;" width="10" height="8" viewBox="0 0 10 8"><path class="s" stroke="#424650" stroke-width="1.700" d="M1 0.900h8L5 7.100z"/></svg>
<div class="abs" style="left:953px;top:398px;width:2px;height:17.5px;background:#9b9ba4;border-radius:1px;"></div>
<div class="t" style="left:971.30px;top:400.00px;font-size:14px;color:#424650;font-weight:700;letter-spacing:-0.156px;">Status check</div>
<div class="abs" style="left:1103px;top:398px;width:2px;height:17.5px;background:#9b9ba4;border-radius:1px;"></div>
<div class="t" style="left:1121.30px;top:400.00px;font-size:14px;color:#424650;font-weight:700;letter-spacing:0.016px;">Alarm status</div>
<div class="abs" style="left:1233px;top:398px;width:2px;height:17.5px;background:#9b9ba4;border-radius:1px;"></div>
<div class="t" style="left:1251.30px;top:400.00px;font-size:14px;color:#424650;font-weight:700;letter-spacing:0.027px;">Availability Zone</div>
<svg style="left:1380px;top:403px;" width="10" height="8" viewBox="0 0 10 8"><path class="s" stroke="#424650" stroke-width="1.700" d="M1 0.900h8L5 7.100z"/></svg>
<div class="abs" style="left:1403px;top:398px;width:2px;height:17.5px;background:#9b9ba4;border-radius:1px;"></div>
<div class="t" style="left:1421.30px;top:400.00px;font-size:14px;color:#424650;font-weight:700;letter-spacing:-0.164px;">Public IPv4 DNS</div>
<svg style="left:1580px;top:403px;" width="10" height="8" viewBox="0 0 10 8"><path class="s" stroke="#424650" stroke-width="1.700" d="M1 0.900h8L5 7.100z"/></svg>
<div class="abs" style="left:1603px;top:398px;width:2px;height:17.5px;background:#9b9ba4;border-radius:1px;"></div>
<div class="t" style="left:1621.30px;top:400.00px;font-size:14px;color:#424650;font-weight:700;letter-spacing:0.062px;">Public IPv4 ...</div>
<svg style="left:1730px;top:403px;" width="10" height="8" viewBox="0 0 10 8"><path class="s" stroke="#424650" stroke-width="1.700" d="M1 0.900h8L5 7.100z"/></svg>
<div class="abs" style="left:1753px;top:398px;width:2px;height:17.5px;background:#9b9ba4;border-radius:1px;"></div>
<div class="t" style="left:1771.30px;top:400.00px;font-size:14px;color:#424650;font-weight:700;letter-spacing:-0.227px;">Elastic IP</div>
<div class="abs" style="left:265px;top:422px;width:1631px;height:1px;background:#c6c6cd;"></div>
<div class="abs" style="left:265px;top:456px;width:1639px;height:33px;background:#f0fbff;border:2px solid #006ce0;border-radius:8px 0 0 8px;border-right:none;"></div>
<div class="abs" style="left:1896px;top:456px;width:24px;height:33px;background:#fbfbfb;"></div>
<div class="abs" style="left:265px;top:521px;width:1631px;height:1px;background:#e4e4ea;"></div>
<div class="abs" style="left:265px;top:553px;width:1631px;height:1px;background:#e4e4ea;"></div>
<div class="abs" style="left:265px;top:586px;width:1631px;height:1px;background:#e4e4ea;"></div>
<div class="abs" style="left:265px;top:618px;width:1631px;height:1px;background:#e4e4ea;"></div>
<div class="abs" style="left:278px;top:431px;width:16px;height:16px;background:#fff;border:1px solid #8c8c94;border-radius:4px;"></div>
<div class="t" style="left:321.30px;top:433.00px;font-size:14px;color:#0f141a;letter-spacing:0.118px;">Inventory-App</div>
<div class="t" style="left:461.30px;top:433.00px;font-size:14px;color:#006ce0;letter-spacing:0.097px;">i-09521b02633714c1a</div>
<svg style="left:661px;top:432.5px;" width="16" height="16" viewBox="0 0 16 16"><g class="s" stroke="#00802f" stroke-width="1.900"><circle cx="8" cy="8" r="6.900"/><path d="M4.800 8.300l2.200 2.200 4.200-4.600"/></g></svg>
<div class="t" style="left:681.30px;top:434.00px;font-size:14px;color:#00802f;letter-spacing:0.049px;">Running</div>
<svg style="left:745px;top:430.8px;" width="16" height="16" viewBox="0 0 16 16"><g class="s" stroke="#006ce0" stroke-width="1.900"><circle cx="6.600" cy="6.600" r="5.600"/><path d="M10.800 10.800l3.800 3.800M4.100 6.600h5M6.600 4.100v5"/></g></svg>
<svg style="left:769.3px;top:430.8px;" width="16" height="16" viewBox="0 0 16 16"><g class="s" stroke="#006ce0" stroke-width="1.900"><circle cx="6.600" cy="6.600" r="5.600"/><path d="M10.800 10.800l3.800 3.800M4.100 6.600h5"/></g></svg>
<div class="t" style="left:821.30px;top:433.00px;font-size:14px;color:#0f141a;letter-spacing:0.025px;">t2.micro</div>
<svg style="left:970.8px;top:431.8px;" width="16" height="16" viewBox="0 0 16 16"><g class="s" stroke="#00802f" stroke-width="1.900"><circle cx="8" cy="8" r="6.900"/><path d="M4.800 8.300l2.200 2.200 4.200-4.600"/></g></svg>
<div class="t" style="left:991.80px;top:433.00px;font-size:14px;color:#00802f;letter-spacing:-0.263px;">2/2 checks passed</div>
<div class="t" style="left:1121.30px;top:433.00px;font-size:14px;color:#006ce0;font-weight:700;letter-spacing:0.165px;">View alarms</div>
<svg style="left:1210px;top:433px;" width="12" height="12" viewBox="0 0 12 12"><path stroke="#006ce0" stroke-width="2" d="M6 0v12M0 6h12"/></svg>
<div class="t" style="left:1251.30px;top:433.00px;font-size:14px;color:#0f141a;letter-spacing:-0.116px;">us-east-1b</div>
<div class="t" style="left:1421.30px;top:433.00px;font-size:14px;color:#0f141a;letter-spacing:-0.3px;transform:scaleX(0.9337);transform-origin:0 0;">–</div>
<div class="t" style="left:1621.30px;top:433.00px;font-size:14px;color:#0f141a;letter-spacing:-0.3px;transform:scaleX(0.9337);transform-origin:0 0;">–</div>
<div class="t" style="left:1771.30px;top:433.00px;font-size:14px;color:#0f141a;letter-spacing:-0.3px;transform:scaleX(0.9337);transform-origin:0 0;">–</div>
<div class="abs" style="left:278px;top:463px;width:16px;height:16px;background:#006ce0;border-radius:4px;"></div>
<svg style="left:280.5px;top:465.5px;" width="11" height="11" viewBox="0 0 11 11"><path class="s" stroke="#fff" stroke-width="2" d="M1.500 5.800l2.700 2.700 5.300-6"/></svg>
<div class="t" style="left:321.30px;top:465.00px;font-size:14px;color:#0f141a;letter-spacing:0.118px;">Inventory-App</div>
<div class="t" style="left:461.30px;top:465.00px;font-size:14px;color:#006ce0;letter-spacing:0.234px;">i-076413b0593623af4</div>
<svg style="left:661px;top:464.5px;" width="16" height="16" viewBox="0 0 16 16"><g class="s" stroke="#656871" stroke-width="1.900"><circle cx="8" cy="8" r="6.900"/><path d="M4.800 8h6.400"/></g></svg>
<div class="t" style="left:681.30px;top:466.00px;font-size:14px;color:#656871;letter-spacing:-0.057px;">Terminated</div>
<svg style="left:755px;top:462.8px;" width="16" height="16" viewBox="0 0 16 16"><g class="s" stroke="#006ce0" stroke-width="1.900"><circle cx="6.600" cy="6.600" r="5.600"/><path d="M10.800 10.800l3.800 3.800M4.100 6.600h5M6.600 4.100v5"/></g></svg>
<svg style="left:779.3px;top:462.8px;" width="16" height="16" viewBox="0 0 16 16"><g class="s" stroke="#006ce0" stroke-width="1.900"><circle cx="6.600" cy="6.600" r="5.600"/><path d="M10.800 10.800l3.800 3.800M4.100 6.600h5"/></g></svg>
<div class="t" style="left:821.30px;top:465.00px;font-size:14px;color:#0f141a;letter-spacing:0.025px;">t2.micro</div>
<div class="t" style="left:971.30px;top:465.00px;font-size:14px;color:#0f141a;letter-spacing:-0.3px;transform:scaleX(0.9337);transform-origin:0 0;">–</div>
<div class="t" style="left:1121.30px;top:465.00px;font-size:14px;color:#006ce0;font-weight:700;letter-spacing:0.165px;">View alarms</div>
<svg style="left:1210px;top:465px;" width="12" height="12" viewBox="0 0 12 12"><path stroke="#006ce0" stroke-width="2" d="M6 0v12M0 6h12"/></svg>
<div class="t" style="left:1251.30px;top:465.00px;font-size:14px;color:#0f141a;letter-spacing:-0.296px;">us-east-1a</div>
<div class="t" style="left:1421.30px;top:465.00px;font-size:14px;color:#0f141a;letter-spacing:-0.3px;transform:scaleX(0.9337);transform-origin:0 0;">–</div>
<div class="t" style="left:1621.30px;top:465.00px;font-size:14px;color:#0f141a;letter-spacing:-0.3px;transform:scaleX(0.9337);transform-origin:0 0;">–</div>
<div class="t" style="left:1771.30px;top:465.00px;font-size:14px;color:#0f141a;letter-spacing:-0.3px;transform:scaleX(0.9337);transform-origin:0 0;">–</div>
<div class="abs" style="left:278px;top:496px;width:16px;height:16px;background:#fff;border:1px solid #8c8c94;border-radius:4px;"></div>
<div class="t" style="left:321.30px;top:498.00px;font-size:14px;color:#0f141a;letter-spacing:0.118px;">Inventory-App</div>
<div class="t" style="left:461.30px;top:498.00px;font-size:14px;color:#006ce0;letter-spacing:0.135px;">i-04638a7b66ab92450</div>
<svg style="left:661px;top:497.5px;" width="16" height="16" viewBox="0 0 16 16"><g class="s" stroke="#656871" stroke-width="1.900"><circle cx="8" cy="8" r="6.900"/><path d="M4.800 8h6.400"/></g></svg>
<div class="t" style="left:681.30px;top:499.00px;font-size:14px;color:#656871;letter-spacing:-0.057px;">Terminated</div>
<svg style="left:755px;top:495.8px;" width="16" height="16" viewBox="0 0 16 16"><g class="s" stroke="#006ce0" stroke-width="1.900"><circle cx="6.600" cy="6.600" r="5.600"/><path d="M10.800 10.800l3.800 3.800M4.100 6.600h5M6.600 4.100v5"/></g></svg>
<svg style="left:779.3px;top:495.8px;" width="16" height="16" viewBox="0 0 16 16"><g class="s" stroke="#006ce0" stroke-width="1.900"><circle cx="6.600" cy="6.600" r="5.600"/><path d="M10.800 10.800l3.800 3.800M4.100 6.600h5"/></g></svg>
<div class="t" style="left:821.30px;top:498.00px;font-size:14px;color:#0f141a;letter-spacing:0.025px;">t2.micro</div>
<div class="t" style="left:971.30px;top:498.00px;font-size:14px;color:#0f141a;letter-spacing:-0.3px;transform:scaleX(0.9337);transform-origin:0 0;">–</div>
<div class="t" style="left:1121.30px;top:498.00px;font-size:14px;color:#006ce0;font-weight:700;letter-spacing:0.165px;">View alarms</div>
<svg style="left:1210px;top:498px;" width="12" height="12" viewBox="0 0 12 12"><path stroke="#006ce0" stroke-width="2" d="M6 0v12M0 6h12"/></svg>
<div class="t" style="left:1251.30px;top:498.00px;font-size:14px;color:#0f141a;letter-spacing:-0.296px;">us-east-1a</div>
<div class="t" style="left:1421.30px;top:498.00px;font-size:14px;color:#0f141a;letter-spacing:-0.3px;transform:scaleX(0.9337);transform-origin:0 0;">–</div>
<div class="t" style="left:1621.30px;top:498.00px;font-size:14px;color:#0f141a;letter-spacing:-0.3px;transform:scaleX(0.9337);transform-origin:0 0;">–</div>
<div class="t" style="left:1771.30px;top:498.00px;font-size:14px;color:#0f141a;letter-spacing:-0.3px;transform:scaleX(0.9337);transform-origin:0 0;">–</div>
<div class="abs" style="left:278px;top:529px;width:16px;height:16px;background:#fff;border:1px solid #8c8c94;border-radius:4px;"></div>
<div class="t" style="left:321.30px;top:531.00px;font-size:14px;color:#0f141a;letter-spacing:0.118px;">Inventory-App</div>
<div class="t" style="left:461.30px;top:531.00px;font-size:14px;color:#006ce0;letter-spacing:0.165px;">i-052a8e789fb6cbf06</div>
<svg style="left:661px;top:530.5px;" width="16" height="16" viewBox="0 0 16 16"><g class="s" stroke="#656871" stroke-width="1.900"><circle cx="8" cy="8" r="6.900"/><path d="M4.800 8h6.400"/></g></svg>
<div class="t" style="left:681.30px;top:532.00px;font-size:14px;color:#656871;letter-spacing:-0.057px;">Terminated</div>
<svg style="left:755px;top:528.8px;" width="16" height="16" viewBox="0 0 16 16"><g class="s" stroke="#006ce0" stroke-width="1.900"><circle cx="6.600" cy="6.600" r="5.600"/><path d="M10.800 10.800l3.800 3.800M4.100 6.600h5M6.600 4.100v5"/></g></svg>
<svg style="left:779.3px;top:528.8px;" width="16" height="16" viewBox="0 0 16 16"><g class="s" stroke="#006ce0" stroke-width="1.900"><circle cx="6.600" cy="6.600" r="5.600"/><path d="M10.800 10.800l3.800 3.800M4.100 6.600h5"/></g></svg>
<div class="t" style="left:821.30px;top:531.00px;font-size:14px;color:#0f141a;letter-spacing:0.025px;">t2.micro</div>
<div class="t" style="left:971.30px;top:531.00px;font-size:14px;color:#0f141a;letter-spacing:-0.3px;transform:scaleX(0.9337);transform-origin:0 0;">–</div>
<div class="t" style="left:1121.30px;top:531.00px;font-size:14px;color:#006ce0;font-weight:700;letter-spacing:0.165px;">View alarms</div>
<svg style="left:1210px;top:531px;" width="12" height="12" viewBox="0 0 12 12"><path stroke="#006ce0" stroke-width="2" d="M6 0v12M0 6h12"/></svg>
<div class="t" style="left:1251.30px;top:531.00px;font-size:14px;color:#0f141a;letter-spacing:-0.116px;">us-east-1b</div>
<div class="t" style="left:1421.30px;top:531.00px;font-size:14px;color:#0f141a;letter-spacing:-0.3px;transform:scaleX(0.9337);transform-origin:0 0;">–</div>
<div class="t" style="left:1621.30px;top:531.00px;font-size:14px;color:#0f141a;letter-spacing:-0.3px;transform:scaleX(0.9337);transform-origin:0 0;">–</div>
<div class="t" style="left:1771.30px;top:531.00px;font-size:14px;color:#0f141a;letter-spacing:-0.3px;transform:scaleX(0.9337);transform-origin:0 0;">–</div>
<div class="abs" style="left:278px;top:561px;width:16px;height:16px;background:#fff;border:1px solid #8c8c94;border-radius:4px;"></div>
<div class="t" style="left:321.30px;top:563.00px;font-size:14px;color:#0f141a;letter-spacing:-0.220px;">Web Server 1</div>
<div class="t" style="left:461.30px;top:563.00px;font-size:14px;color:#006ce0;letter-spacing:-0.068px;">i-0dc49fea31a2efccb</div>
<svg style="left:661px;top:562.5px;" width="16" height="16" viewBox="0 0 16 16"><g class="s" stroke="#00802f" stroke-width="1.900"><circle cx="8" cy="8" r="6.900"/><path d="M4.800 8.300l2.200 2.200 4.200-4.600"/></g></svg>
<div class="t" style="left:681.30px;top:564.00px;font-size:14px;color:#00802f;letter-spacing:0.049px;">Running</div>
<svg style="left:745px;top:560.8px;" width="16" height="16" viewBox="0 0 16 16"><g class="s" stroke="#006ce0" stroke-width="1.900"><circle cx="6.600" cy="6.600" r="5.600"/><path d="M10.800 10.800l3.800 3.800M4.100 6.600h5M6.600 4.100v5"/></g></svg>
<svg style="left:769.3px;top:560.8px;" width="16" height="16" viewBox="0 0 16 16"><g class="s" stroke="#006ce0" stroke-width="1.900"><circle cx="6.600" cy="6.600" r="5.600"/><path d="M10.800 10.800l3.800 3.800M4.100 6.600h5"/></g></svg>
<div class="t" style="left:821.30px;top:563.00px;font-size:14px;color:#0f141a;letter-spacing:0.025px;">t2.micro</div>
<svg style="left:970.8px;top:561.8px;" width="16" height="16" viewBox="0 0 16 16"><g class="s" stroke="#00802f" stroke-width="1.900"><circle cx="8" cy="8" r="6.900"/><path d="M4.800 8.300l2.200 2.200 4.200-4.600"/></g></svg>
<div class="t" style="left:991.80px;top:563.00px;font-size:14px;color:#00802f;letter-spacing:-0.263px;">2/2 checks passed</div>
<div class="t" style="left:1121.30px;top:563.00px;font-size:14px;color:#006ce0;font-weight:700;letter-spacing:0.165px;">View alarms</div>
<svg style="left:1210px;top:563px;" width="12" height="12" viewBox="0 0 12 12"><path stroke="#006ce0" stroke-width="2" d="M6 0v12M0 6h12"/></svg>
<div class="t" style="left:1251.30px;top:563.00px;font-size:14px;color:#0f141a;letter-spacing:-0.296px;">us-east-1a</div>
<div class="t" style="left:1421.30px;top:563.00px;font-size:14px;color:#0f141a;letter-spacing:0.109px;">ec2-3-239-229-93.comp...</div>
<div class="t" style="left:1621.30px;top:563.00px;font-size:14px;color:#0f141a;letter-spacing:-0.087px;">3.239.229.93</div>
<div class="t" style="left:1771.30px;top:563.00px;font-size:14px;color:#0f141a;letter-spacing:-0.3px;transform:scaleX(0.9337);transform-origin:0 0;">–</div>
<div class="abs" style="left:278px;top:594px;width:16px;height:16px;background:#fff;border:1px solid #8c8c94;border-radius:4px;"></div>
<div class="t" style="left:321.30px;top:596.00px;font-size:14px;color:#0f141a;letter-spacing:0.118px;">Inventory-App</div>
<div class="t" style="left:461.30px;top:596.00px;font-size:14px;color:#006ce0;letter-spacing:0.071px;">i-057de193d818a425c</div>
<svg style="left:661px;top:595.5px;" width="16" height="16" viewBox="0 0 16 16"><g class="s" stroke="#00802f" stroke-width="1.900"><circle cx="8" cy="8" r="6.900"/><path d="M4.800 8.300l2.200 2.200 4.200-4.600"/></g></svg>
<div class="t" style="left:681.30px;top:597.00px;font-size:14px;color:#00802f;letter-spacing:0.049px;">Running</div>
<svg style="left:745px;top:593.8px;" width="16" height="16" viewBox="0 0 16 16"><g class="s" stroke="#006ce0" stroke-width="1.900"><circle cx="6.600" cy="6.600" r="5.600"/><path d="M10.800 10.800l3.800 3.800M4.100 6.600h5M6.600 4.100v5"/></g></svg>
<svg style="left:769.3px;top:593.8px;" width="16" height="16" viewBox="0 0 16 16"><g class="s" stroke="#006ce0" stroke-width="1.900"><circle cx="6.600" cy="6.600" r="5.600"/><path d="M10.800 10.800l3.800 3.800M4.100 6.600h5"/></g></svg>
<div class="t" style="left:821.30px;top:596.00px;font-size:14px;color:#0f141a;letter-spacing:0.025px;">t2.micro</div>
<svg style="left:970.8px;top:594.8px;" width="16" height="16" viewBox="0 0 16 16"><g class="s" stroke="#656871" stroke-width="1.900"><circle cx="8" cy="8" r="6.900"/><path d="M8 4.200V8.300H4.800"/></g></svg>
<div class="t" style="left:991.80px;top:596.00px;font-size:14px;color:#656871;letter-spacing:0.3px;transform:scaleX(1.0064);transform-origin:0 0;">Initializing</div>
<div class="t" style="left:1121.30px;top:596.00px;font-size:14px;color:#006ce0;font-weight:700;letter-spacing:0.165px;">View alarms</div>
<svg style="left:1210px;top:596px;" width="12" height="12" viewBox="0 0 12 12"><path stroke="#006ce0" stroke-width="2" d="M6 0v12M0 6h12"/></svg>
<div class="t" style="left:1251.30px;top:596.00px;font-size:14px;color:#0f141a;letter-spacing:-0.296px;">us-east-1a</div>
<div class="t" style="left:1421.30px;top:596.00px;font-size:14px;color:#0f141a;letter-spacing:-0.3px;transform:scaleX(0.9337);transform-origin:0 0;">–</div>
<div class="t" style="left:1621.30px;top:596.00px;font-size:14px;color:#0f141a;letter-spacing:-0.3px;transform:scaleX(0.9337);transform-origin:0 0;">–</div>
<div class="t" style="left:1771.30px;top:596.00px;font-size:14px;color:#0f141a;letter-spacing:-0.3px;transform:scaleX(0.9337);transform-origin:0 0;">–</div>
<div class="abs" style="left:278px;top:626px;width:16px;height:16px;background:#fff;border:1px solid #8c8c94;border-radius:4px;"></div>
<div class="t" style="left:321.30px;top:628.00px;font-size:14px;color:#0f141a;letter-spacing:0.118px;">Inventory-App</div>
<div class="t" style="left:461.30px;top:628.00px;font-size:14px;color:#006ce0;letter-spacing:0.071px;">i-0e600b4514bdec049</div>
<svg style="left:661px;top:627.5px;" width="16" height="16" viewBox="0 0 16 16"><g class="s" stroke="#656871" stroke-width="1.900"><circle cx="8" cy="8" r="6.900"/><path d="M4.800 8h6.400"/></g></svg>
<div class="t" style="left:681.30px;top:629.00px;font-size:14px;color:#656871;letter-spacing:-0.057px;">Terminated</div>
<svg style="left:755px;top:625.8px;" width="16" height="16" viewBox="0 0 16 16"><g class="s" stroke="#006ce0" stroke-width="1.900"><circle cx="6.600" cy="6.600" r="5.600"/><path d="M10.800 10.800l3.800 3.800M4.100 6.600h5M6.600 4.100v5"/></g></svg>
<svg style="left:779.3px;top:625.8px;" width="16" height="16" viewBox="0 0 16 16"><g class="s" stroke="#006ce0" stroke-width="1.900"><circle cx="6.600" cy="6.600" r="5.600"/><path d="M10.800 10.800l3.800 3.800M4.100 6.600h5"/></g></svg>
<div class="t" style="left:821.30px;top:628.00px;font-size:14px;color:#0f141a;letter-spacing:0.025px;">t2.micro</div>
<div class="t" style="left:971.30px;top:628.00px;font-size:14px;color:#0f141a;letter-spacing:-0.3px;transform:scaleX(0.9337);transform-origin:0 0;">–</div>
<div class="t" style="left:1121.30px;top:628.00px;font-size:14px;color:#006ce0;font-weight:700;letter-spacing:0.165px;">View alarms</div>
<svg style="left:1210px;top:628px;" width="12" height="12" viewBox="0 0 12 12"><path stroke="#006ce0" stroke-width="2" d="M6 0v12M0 6h12"/></svg>
<div class="t" style="left:1251.30px;top:628.00px;font-size:14px;color:#0f141a;letter-spacing:-0.296px;">us-east-1a</div>
<div class="t" style="left:1421.30px;top:628.00px;font-size:14px;color:#0f141a;letter-spacing:-0.3px;transform:scaleX(0.9337);transform-origin:0 0;">–</div>
<div class="t" style="left:1621.30px;top:628.00px;font-size:14px;color:#0f141a;letter-spacing:-0.3px;transform:scaleX(0.9337);transform-origin:0 0;">–</div>
<div class="t" style="left:1771.30px;top:628.00px;font-size:14px;color:#0f141a;letter-spacing:-0.3px;transform:scaleX(0.9337);transform-origin:0 0;">–</div>
<svg style="left:272px;top:656px;" width="7" height="13" viewBox="0 0 7 13"><path fill="#8a8a8a" d="M7 0v13L0 6.500z"/></svg>
<svg style="left:1882px;top:656px;" width="7" height="13" viewBox="0 0 7 13"><path fill="#8a8a8a" d="M0 0l7 6.500L0 13z"/></svg>
<div class="abs" style="left:288px;top:657px;width:862px;height:11px;background:#8f8f8f;border-radius:5.500px;"></div>
<div class="abs" style="left:241px;top:836px;width:1679px;height:160px;background:#fff;"></div>
<div class="abs" style="left:241px;top:836px;width:1679px;height:1px;background:#c6c6cd;"></div>
<div class="abs" style="left:1074px;top:846px;width:13px;height:2px;background:#424650;border-radius:1px;"></div>
<div class="t" style="left:265.80px;top:859.00px;font-size:17.4px;color:#0f141a;font-weight:700;letter-spacing:0.3px;transform:scaleX(1.0372);transform-origin:0 0;">i-076413b0593623af4 (Inventory-App)</div>
<svg style="left:1810.7px;top:859.5px;" width="14.6" height="14.6" viewBox="0 0 16 16.400"><g class="s" stroke="#424650" stroke-width="1.9" transform="translate(0 -.2)"><path d="M6.800 1h2.400l.4 1.900 1.300.6 1.700-1 1.700 1.700-1 1.700.6 1.300 1.900.4v2.400l-1.900.4-.6 1.300 1 1.700-1.700 1.700-1.700-1-1.300.6-.4 1.900H6.800l-.4-1.900-1.300-.6-1.700 1-1.700-1.700 1-1.700-.6-1.300L.2 9.400V7l1.900-.4.6-1.300-1-1.700 1.700-1.700 1.700 1 1.300-.6z"/><circle cx="8" cy="8.200" r="2.300"/></g></svg>
<div class="abs" style="left:1840px;top:855px;width:1px;height:23.5px;background:#c6c6cd;"></div>
<svg style="left:1856px;top:863px;" width="14" height="9" viewBox="0 0 14 9"><path class="s" stroke="#232b37" stroke-width="1.900" d="M1.200 1.200L7 7.200l5.800-6"/></svg>
<div class="abs" style="left:265px;top:944px;width:1612px;height:1px;background:#c6c6cd;"></div>
<div class="abs" style="left:267px;top:940px;width:90.5px;height:4px;background:#006ce0;border-radius:2px;"></div>
<div class="t" style="left:286.80px;top:914.00px;font-size:16px;color:#006ce0;font-weight:700;letter-spacing:-0.181px;">Details</div>
<div class="t" style="left:380.50px;top:914.00px;font-size:16px;color:#424650;font-weight:700;letter-spacing:-0.196px;">Status and alarms</div>
<div class="t" style="left:557.50px;top:914.00px;font-size:16px;color:#424650;font-weight:700;letter-spacing:-0.084px;">Monitoring</div>
<div class="t" style="left:683.30px;top:914.00px;font-size:16px;color:#424650;font-weight:700;letter-spacing:-0.255px;">Security</div>
<div class="t" style="left:787.20px;top:914.00px;font-size:16px;color:#424650;font-weight:700;letter-spacing:-0.003px;">Networking</div>
<div class="t" style="left:918.00px;top:914.00px;font-size:16px;color:#424650;font-weight:700;letter-spacing:-0.3px;transform:scaleX(0.9986);transform-origin:0 0;">Storage</div>
<div class="t" style="left:1017.80px;top:914.00px;font-size:16px;color:#424650;font-weight:700;letter-spacing:-0.289px;">Tags</div>
<div class="abs" style="left:358px;top:907px;width:1px;height:27.5px;background:#c6c6cd;"></div>
<div class="abs" style="left:535px;top:907px;width:1px;height:27.5px;background:#c6c6cd;"></div>
<div class="abs" style="left:661px;top:907px;width:1px;height:27.5px;background:#c6c6cd;"></div>
<div class="abs" style="left:765px;top:907px;width:1px;height:27.5px;background:#c6c6cd;"></div>
<div class="abs" style="left:896px;top:907px;width:1px;height:27.5px;background:#c6c6cd;"></div>
<div class="abs" style="left:996px;top:907px;width:1px;height:27.5px;background:#c6c6cd;"></div>
<svg style="left:267px;top:972.5px;" width="10" height="8" viewBox="0 0 10 8"><path fill="#0f141a" d="M0 0h10L5 8z"/></svg>
<div class="t" style="left:285.80px;top:969.00px;font-size:16px;color:#0f141a;font-weight:700;letter-spacing:-0.188px;">Instance summary</div>
<div class="t" style="left:432.50px;top:972.00px;font-size:12px;color:#006ce0;font-weight:700;letter-spacing:0.125px;">Info</div>
<div class="abs" style="left:798px;top:988px;width:1px;height:8px;background:#c6c6cd;"></div>
<div class="abs" style="left:1342px;top:988px;width:1px;height:8px;background:#c6c6cd;"></div>
<div class="abs" style="left:1901px;top:837px;width:19px;height:159px;background:#fafafa;"></div>
<svg style="left:1904px;top:845px;" width="13" height="7" viewBox="0 0 13 7"><path fill="#8a8a8a" d="M6.500 0L13 7H0z"/></svg>
<svg style="left:1904px;top:981px;" width="13" height="7" viewBox="0 0 13 7"><path fill="#8a8a8a" d="M0 0h13L6.500 7z"/></svg>
<div class="abs" style="left:1904.5px;top:860px;width:12px;height:21px;background:#8f8f8f;border-radius:6px;"></div>
<div class="t" style="left:1554.70px;top:930.00px;font-size:23.7px;color:rgba(120,120,120,.5);letter-spacing:0.3px;transform:scaleX(1.0170);transform-origin:0 0;">Activate Windows</div>
<div class="t" style="left:1554.70px;top:961.00px;font-size:18px;color:rgba(120,120,120,.46);letter-spacing:-0.033px;">Go to Settings to activate Windows.</div>
<div class="abs" style="left:0px;top:996px;width:1920px;height:34px;background:#161d26;"></div>
<svg style="left:16.5px;top:1006.3px;" width="15.5" height="15.5" viewBox="0 0 15.5 15.5"><g class="s" stroke="#fff" stroke-width="1.600"><rect x="0.800" y="0.800" width="13.900" height="13.900" rx="1.800"/><path d="M3.800 4.800l3 3-3 3M8.500 10.800h3.200"/></g></svg>
<div class="t" style="left:37.50px;top:1008.00px;font-size:12px;color:#fff;letter-spacing:-0.135px;">CloudShell</div>
<div class="t" style="left:119.50px;top:1008.00px;font-size:12px;color:#fff;letter-spacing:-0.3px;transform:scaleX(0.9880);transform-origin:0 0;">Feedback</div>
<div class="t" style="left:1384.00px;top:1008.00px;font-size:12px;color:#e9e9ee;letter-spacing:-0.055px;">© 2025, Amazon Web Services, Inc. or its affiliates.</div>
<div class="t" style="left:1684.00px;top:1008.00px;font-size:12px;color:#fff;letter-spacing:-0.235px;">Privacy</div>
<div class="t" style="left:1747.00px;top:1008.00px;font-size:12px;color:#fff;letter-spacing:-0.134px;">Terms</div>
<div class="t" style="left:1804.00px;top:1008.00px;font-size:12px;color:#fff;letter-spacing:-0.226px;">Cookie preferences</div>
<div class="abs" style="left:0px;top:1030px;width:1920px;height:50px;background:#1c1c1c;"></div>
<svg style="left:20px;top:1045px;" width="20" height="20" viewBox="0 0 20 20"><path fill="#fff" d="M0 2.800L8.200 1.700v7.900H0zM9.200 1.500L20 0v9.600H9.200zM0 10.500h8.200v7.900L0 17.300zM9.200 10.500H20V20L9.200 18.500z"/></svg>
<div class="abs" style="left:60px;top:1030px;width:360px;height:50px;background:#333333;border:1px solid #575757;"></div>
<svg style="left:74px;top:1044px;" width="24" height="22" viewBox="0 0 24 22"><g class="s" stroke="#e4e4e4" stroke-width="1.500"><circle cx="14" cy="8.500" r="6.500"/><path d="M9.400 13.300L1.500 21"/></g></svg>
<div class="t" style="left:110.80px;top:1047.00px;font-size:19.6px;color:#e2e2e2;letter-spacing:-0.3px;transform:scaleX(0.9702);transform-origin:0 0;">Type here to search</div>
<svg style="left:320px;top:1031px;" width="99" height="49" viewBox="0 0 99 49"><defs><linearGradient id="tb" x1="0" y1="0" x2="0" y2="1"><stop offset="0" stop-color="#e6e04e"/><stop offset=".25" stop-color="#9bd63e"/><stop offset=".7" stop-color="#7fcf3f"/><stop offset="1" stop-color="#3f9a4c"/></linearGradient><linearGradient id="tp" x1="0" y1="0" x2="0" y2="1"><stop offset="0" stop-color="#6a5aa8"/><stop offset=".45" stop-color="#8a5c8c"/><stop offset=".8" stop-color="#8d5a68"/><stop offset="1" stop-color="#b97ac4"/></linearGradient><linearGradient id="ty" x1="0" y1="0" x2="1" y2="0"><stop offset="0" stop-color="#e6d44c"/><stop offset=".4" stop-color="#fbe98c"/><stop offset="1" stop-color="#f5c400"/></linearGradient><linearGradient id="tr" x1="0" y1="1" x2="1" y2="0"><stop offset="0" stop-color="#d4222a"/><stop offset=".6" stop-color="#ee5a3c"/><stop offset="1" stop-color="#f0a050" stop-opacity="0"/></linearGradient><clipPath id="tc"><rect x="0" y="0" width="99" height="49"/></clipPath></defs><g clip-path="url(#tc)" transform="translate(0 -1)"><g fill="#c6c172" stroke="#4a8f52" stroke-width=".5"><path d="M85.500 11.500c.5-2.500 2.500-4 5-4.200-.3 2.600-2 4.200-5 4.200zM82 18.500c-2-1.500-2.800-3.500-1.800-6 2 1.200 2.800 3.400 1.800 6zM84 19c1.500-2 3.500-3 6-2.500-1 2.300-3.200 3.200-6 2.500zM79.500 26c-2.500-.8-4-2.600-4-5.200 2.500.6 3.900 2.400 4 5.200zM81.500 26.500c1-2.200 3-3.600 5.800-3.800-.6 2.500-2.600 3.900-5.800 3.800zM80 33c1.200-2 3.200-3.200 6-3-.8 2.300-2.800 3.400-6 3z"/><path d="M86 33c3-3.500 7-5 11-4.500-1 4-5 6.500-11 4.500zM83 40.500c3-2.500 6.500-3.500 10-3-1.500 3-5 4.500-10 3zM81.500 46.500c2.500-2 5.500-3 9-2.500-1.500 2.500-4.500 3.500-9 2.500z"/></g><path class="s" stroke="#8fae5a" stroke-width=".7" d="M78.700 35C80 24 84 14 89.500 8.700M80.900 42C83 36 88 31 96.500 28.500"/><g fill="#c4c676" stroke="#5a9a58" stroke-width=".4"><path d="M13 29.500c3 .5 5.500 2.500 6.500 6-3-.2-5.500-2.200-6.500-6zM21 34c2 .5 3 2.200 3 4.500-2-.3-3.200-2-3-4.500zM17 41c1.500-1.500 3.500-2 5.500-1.200-1 1.800-3 2.300-5.500 1.200zM26 37c2 1 3 2.800 2.700 5-2-.8-3-2.600-2.700-5zM20.500 46c1.500-2 3.500-3 6-2.500-1 2.200-3 3-6 2.500zM25 50c1-2.500 3-4 5.500-4-.5 2.500-2.500 4-5.500 4zM31 41c1.500 1 2.300 2.600 2 4.500-1.500-.8-2.300-2.500-2-4.500z"/></g><path class="s" stroke="#9db38a" stroke-width=".6" d="M25 28l5 9M28 27.500l4 11M31 27l3 12M33.500 30l2 9M36 34l.5 6"/><path class="s" stroke="#1f8048" stroke-width="1.800" d="M22 38.500C28 41 33 45 37 51"/><path fill="url(#tp)" d="M53 5.500L57.400 2l2 1.200 2.800-.2 1.500 1.800 3 .8c2.500 2 4 5 5.200 9l1.500 7.500c2.200 5 4 10 5.300 16.500l2 12H72z"/><path fill="#8a5a82" d="M47 32.500c-3 4-5 10-5.800 18.500H50z"/><path fill="url(#ty)" d="M53.600 7c4-.5 8 2 11 7 2.800 5 5.500 11 7.200 18 1.300 6 2 12 2 19H46.300c-.6-6 .2-13 2-19l3-10.500z"/><path fill="url(#tb)" d="M7 31.700C9 19 20 8.500 36 4.500 43 2.700 49 3 53.800 5c-1.800 5-2 11-1.200 17-7 1-13.500 1-20 1.300C22 23.800 13 26 7 31.700z"/><path fill="#3f9a4c" opacity=".55" d="M16 25.800C26 20.500 40 18 52.300 18.300l.3 3.700c-7 1-13.500 1-20 1.300-6 .3-11.500 1-16.600 2.500z"/><path fill="#3cc9dc" d="M16 25c5-3.500 11-6 18-7-4.500 2.500-9 4.500-12.500 5.800-2 .5-4 .8-5.500 1.200z"/><path fill="#f0603f" d="M21.500 19.500C28 15 36 12.300 44 12c1 .1 1 1-.2 1.800C37 14.500 29 16.500 21.500 19.500z"/><path fill="url(#tr)" d="M7 31.700C8 25 12 19.500 17.500 15.500c.5 3-.2 6.500-1 9.500C13 26.500 9.500 29 7 31.700z"/><path class="s" stroke="#3a2a14" stroke-width=".9" d="M53.400 6.500c-1.600 5-1.800 10.500-.8 15.500"/><ellipse cx="58" cy="13.500" rx="4.300" ry="4.600" fill="#aee05c" opacity=".9"/><circle cx="58.200" cy="13.100" r="2.900" fill="#7d4d0f"/><circle cx="58.300" cy="12.900" r="1.300" fill="#1d1330"/></g></svg>
<svg style="left:439px;top:1040px;" width="30" height="30" viewBox="0 0 30 30"><defs><linearGradient id="ed1" x1="0" y1="0" x2="1" y2="1"><stop offset="0" stop-color="#2ab7e6"/><stop offset=".55" stop-color="#1877d2"/><stop offset="1" stop-color="#0f5bb5"/></linearGradient><linearGradient id="ed2" x1="0" y1="0" x2="1" y2=".6"><stop offset="0" stop-color="#27b3e0"/><stop offset=".5" stop-color="#3ccf9f"/><stop offset="1" stop-color="#63dc55"/></linearGradient><clipPath id="edc"><circle cx="15" cy="15" r="15"/></clipPath></defs><g clip-path="url(#edc)"><rect width="30" height="30" fill="url(#ed1)"/><path fill="url(#ed2)" d="M2 9C5 3 10 0 15.500 0 24 0 30 6 30 13c0 4.500-3 7.500-7 7.500-2.500 0-4.500-1-5.200-2.500 1.500-1 2.200-2.500 2.200-4 0-3.500-3.200-6-7.500-6C8 8 4.500 10 2 14z"/><path fill="#0d53a6" d="M8 19.500c0 5 3.800 9 9 10.300C10 31 2.500 27 .6 19.500.3 14.500 3.500 10.500 8.500 10c3-.3 5.500.8 6.800 2.800-4-.3-7.300 2.500-7.300 6.700z"/><path fill="#1c1c1c" d="M12.500 15.800a3.300 3.300 0 1 1 5.500 2.500c2.500 1.800 6.500 1.500 9.800-.8-2 3.500-6 5-10 4.200-3-.7-5.300-2.900-5.300-5.900z"/></g></svg>
<div class="abs" style="left:429px;top:1077px;width:51px;height:3px;background:#8fa4b1;"></div>
<svg style="left:502px;top:1042px;" width="28" height="24" viewBox="0 0 28 24"><path fill="#e8a52a" d="M0 2.500A1.500 1.500 0 0 1 1.500 1H10l2.500 3H0z"/><rect y="3" width="28" height="20" rx="1.500" fill="#f7c948"/><path fill="#fbd869" d="M0 6h28v3H0z"/><path fill="#3d8fdc" d="M5 14h18v9h-4v-5H9v5H5z"/><path fill="#69b1f0" d="M5 14h18v2.500H5z"/></svg>
<div class="abs" style="left:491px;top:1077px;width:51px;height:3px;background:#8fa4b1;"></div>
<svg style="left:562.5px;top:1041px;" width="30" height="29" viewBox="0 0 30 29"><defs><linearGradient id="stg" x1="0" y1="0" x2="0" y2="1"><stop offset="0" stop-color="#ffffff"/><stop offset="1" stop-color="#e4e4e4"/></linearGradient></defs><path class="s" stroke="#25b1f0" stroke-width="1.800" d="M8.300 5V2.300a1.300 1.300 0 0 1 1.300-1.300h10.800a1.300 1.300 0 0 1 1.300 1.300V5"/><path fill="url(#stg)" d="M2.500 4h25A2.500 2.500 0 0 1 30 6.500V24a5 5 0 0 1-5 5H5a5 5 0 0 1-5-5V6.500A2.500 2.500 0 0 1 2.500 4z"/><rect x="9.300" y="11" width="5" height="5" fill="#f25022"/><rect x="15.500" y="11" width="5" height="5" fill="#7fba00"/><rect x="9.300" y="17.200" width="5" height="5" fill="#00a4ef"/><rect x="15.500" y="17.200" width="5" height="5" fill="#ffb900"/></svg>
<svg style="left:625.5px;top:1041.5px;" width="29" height="27" viewBox="0 0 29 27"><defs><linearGradient id="cp1" x1="0" y1="0" x2="0" y2="1"><stop offset="0" stop-color="#1a8cf0"/><stop offset=".35" stop-color="#29b8c8"/><stop offset=".6" stop-color="#6fd05a"/><stop offset=".85" stop-color="#f2d02c"/><stop offset="1" stop-color="#f5a62b"/></linearGradient><linearGradient id="cp2" x1="0" y1="0" x2="0" y2="1"><stop offset="0" stop-color="#a05cf0"/><stop offset=".4" stop-color="#d855b8"/><stop offset=".75" stop-color="#f4687a"/><stop offset="1" stop-color="#f79a3e"/></linearGradient><linearGradient id="cp3" x1="0" y1="0" x2="1" y2="0"><stop offset="0" stop-color="#2aa0f0"/><stop offset="1" stop-color="#1f5fd8"/></linearGradient></defs><path fill="url(#cp3)" d="M7 1.500C8 .6 9 .3 10.500 .3h5.500c2.500 0 4 1.200 4.700 3.500l.8 3h-3l-1-2.800c-.4-1-1-1.500-2.200-1.500H9z"/><path fill="url(#cp1)" d="M8.500.4h7L12 15c-.5 2-1.800 3-3.800 3H3.300c-2.500 0-3.700-1.700-3-4.200L2.800 4.500C3.600 1.800 5.500.4 8.500.4z"/><path fill="url(#cp2)" d="M20.500 26.600h-7L17 12c.5-2 1.800-3 3.800-3h4.900c2.500 0 3.700 1.700 3 4.200L26.200 22.500c-.8 2.700-2.700 4.100-5.700 4.100z"/><path fill="#f0703c" d="M22 25.500c-1 .9-2 1.200-3.500 1.200H13c-2.500 0-4-1.200-4.700-3.500l-.8-3h3l1 2.800c.4 1 1 1.500 2.200 1.500H20z"/></svg>
<div class="abs" style="left:672px;top:1030px;width:56px;height:50px;background:#494949;background:linear-gradient(200deg,#555 0%,#474747 60%,#444 100%);"></div>
<div class="abs" style="left:728px;top:1030px;width:5px;height:50px;background:#3c3c3c;border-left:1px solid #333;"></div>
<svg style="left:688px;top:1039px;" width="28" height="31" viewBox="0 0 28 31"><path fill="#fb542b" d="M14 0l4.500.2 2.800 3 2.600-.6 3 3.700-1.100 2.800 1.200 3.700-3 11c-.5 2-1.700 3.700-3.500 4.900L16 31c-1.100.8-2.500.8-3.600 0l-4.600-3.300c-1.800-1.200-3-2.900-3.500-4.900l-3-11 1.200-3.700L1.400 5.300l3-3.700 2.600.6 2.800-3z"/><path fill="#fff" d="M14 6.500l4.400-1 3.200 4-1 2.100.4 2-3.900 3-1 1.800h-4.200l-1-1.800-3.900-3 .4-2-1-2.100 3.200-4z"/><path fill="#fb542b" d="M14 11l2.500 3.800L14 17l-2.500-2.200zM9 9.300l3 1-1.600 1.800zM19 9.300l-3 1 1.600 1.800z"/></svg>
<svg style="left:699px;top:1051px;" width="20" height="20" viewBox="0 0 20 20"><defs><linearGradient id="bp" x1="0" y1="0" x2="1" y2="1"><stop offset="0" stop-color="#e04aa5"/><stop offset="1" stop-color="#7a3fd0"/></linearGradient><clipPath id="bpc"><circle cx="10" cy="10" r="10"/></clipPath></defs><circle cx="10" cy="10" r="10" fill="url(#bp)"/><g clip-path="url(#bpc)" stroke="#f3d6f5" stroke-width="1"><path d="M0 14L20 3M3 1l16 9"/></g></svg>
<div class="abs" style="left:672px;top:1077px;width:61px;height:3px;background:#8fa4b1;"></div>
<svg style="left:749px;top:1040.5px;" width="28" height="28" viewBox="0 0 28 28"><defs><linearGradient id="np" x1="0" y1="0" x2="1" y2="1"><stop offset="0" stop-color="#4fb3cc"/><stop offset=".5" stop-color="#9ed8e4"/><stop offset="1" stop-color="#e4f3f5"/></linearGradient></defs><path fill="#d9a62b" d="M24.500 4.500l2.200 .5.500 21-2 1z"/><path fill="#f1f1f1" d="M22 25.500l3.800-21.500 1 .4L25 27z"/><path fill="#cfd6d8" d="M20.500 26.800l1.500-1.300L25.300 4 26 4.300 23 27.500z"/><path fill="url(#np)" d="M10.500 1.500l15 2.500-4.500 23L.500 19.500z"/><path fill="#2f7f96" opacity=".55" d="M.500 19.500l.6 1.500L20.500 28l.5-1z"/><path class="s" stroke="#8a8f92" stroke-width="1" stroke-dasharray=".8 1.200" d="M10.800 1l14.700 2.500"/></svg>
<div class="abs" style="left:739px;top:1077px;width:51px;height:3px;background:#8fa4b1;"></div>
<svg style="left:811px;top:1040px;" width="30" height="30" viewBox="0 0 30 30"><path fill="#9a9a9a" d="M1.500 13c-.5 3 1.500 5.500 5 6.500 3 .8 6 .5 8.500-.5l-1-2.500z"/><path fill="#d63b3b" opacity=".9" d="M1.500 14.500c0 2.500 2 4.500 5 5.300 3 .8 6.500.4 9-.8l-.5-1.200c-2.500 1-5.500 1.300-8.300.6-2.500-.7-4-2-4.500-4z"/><ellipse cx="14.500" cy="10.800" rx="12.300" ry="8" fill="#f6f6f6" stroke="#d83a3a" stroke-width="1.500" transform="rotate(-17 14.500 10.800)"/><path stroke="#a9aeb3" stroke-width="1.700" stroke-linecap="round" d="M11.500 4l6.500 14.500M22.500 5.500L11 17"/><path stroke="#c9ccd0" stroke-width=".7" d="M6 9l16-4M7 12l12-3"/><path class="s" stroke="#1f8fe0" stroke-width="2" d="M18 18.500c-1.500 2.500-3 5.500-2 8 .8 2 3 2 3.800 0 .8-2.500-.3-5.500-1.800-8zM18.500 18c2.800-1 5.800-1 7.800.8 1.500 1.500.8 3.500-1.200 3.800-2.500.3-5-1.800-6.600-4.600z"/></svg>
<div class="abs" style="left:801px;top:1077px;width:51px;height:3px;background:#8fa4b1;"></div>
<svg style="left:1631.5px;top:1050px;" width="17" height="10" viewBox="0 0 17 10"><path class="s" stroke="#f0f0f0" stroke-width="1.400" d="M0.800 9.200L8.500 1l7.700 8.200"/></svg>
<svg style="left:1663px;top:1048px;" width="16" height="16" viewBox="0 0 16 16"><g class="s" stroke="#f0f0f0" stroke-width="1.300"><path d="M1 14.500A13.500 13.500 0 0 1 14.500 1M4.800 14.500a9.700 9.700 0 0 1 9.700-9.700M8.600 14.500a5.900 5.900 0 0 1 5.900-5.900"/></g><circle cx="13.300" cy="13.500" r="1.600" fill="#f0f0f0"/></svg>
<svg style="left:1694.5px;top:1045px;" width="21" height="20" viewBox="0 0 21 20"><g class="s" stroke="#f0f0f0" stroke-width="1.400"><path d="M7 17.500L14.500 2.500a1.800 1.800 0 0 1 3.200 1.600L10.200 19l-3.600.8z"/><path d="M6.500 19.800c-3 .5-5.500-1-5.500-3.300 0-2.500 3-4 6.500-3.500M12 13c4-1 8-2.500 8-5 0-1-.8-1.700-2-2"/></g></svg>
<div class="t" style="left:1733.80px;top:1049.00px;font-size:14.8px;color:#f4f4f4;letter-spacing:-0.3px;transform:scaleX(0.8820);transform-origin:0 0;">ENG</div>
<div class="t" style="left:1794.20px;top:1037.00px;font-size:14.8px;color:#f4f4f4;letter-spacing:-0.3px;transform:scaleX(0.9569);transform-origin:0 0;">21:23</div>
<div class="t" style="left:1778.30px;top:1060.00px;font-size:14.8px;color:#f4f4f4;letter-spacing:0.130px;">9/23/2025</div>
<svg style="left:1869px;top:1045px;" width="20" height="21" viewBox="0 0 20 21"><path fill="#f4f4f4" d="M0 0h20v16.500H14l-4.500 4.500v-4.500H0z"/><path stroke="#1c1c1c" stroke-width="1.300" d="M3.500 4.500h13M3.500 8h13M3.500 11.500h13"/></svg>
<svg style="left:1878px;top:1054.5px;" width="21" height="21" viewBox="0 0 21 21"><circle cx="10.500" cy="10.500" r="9.700" fill="#3a3a3a" stroke="#767676" stroke-width="1"/></svg>
<div class="t" style="left:1884.30px;top:1058.00px;font-size:14.5px;color:#fff;font-weight:700;letter-spacing:0.3px;transform:scaleX(1.0145);transform-origin:0 0;">4</div>
<div class="abs" style="left:1914px;top:1030px;width:1px;height:50px;background:#5e5e5e;"></div>
</div>
</body>
</html>
